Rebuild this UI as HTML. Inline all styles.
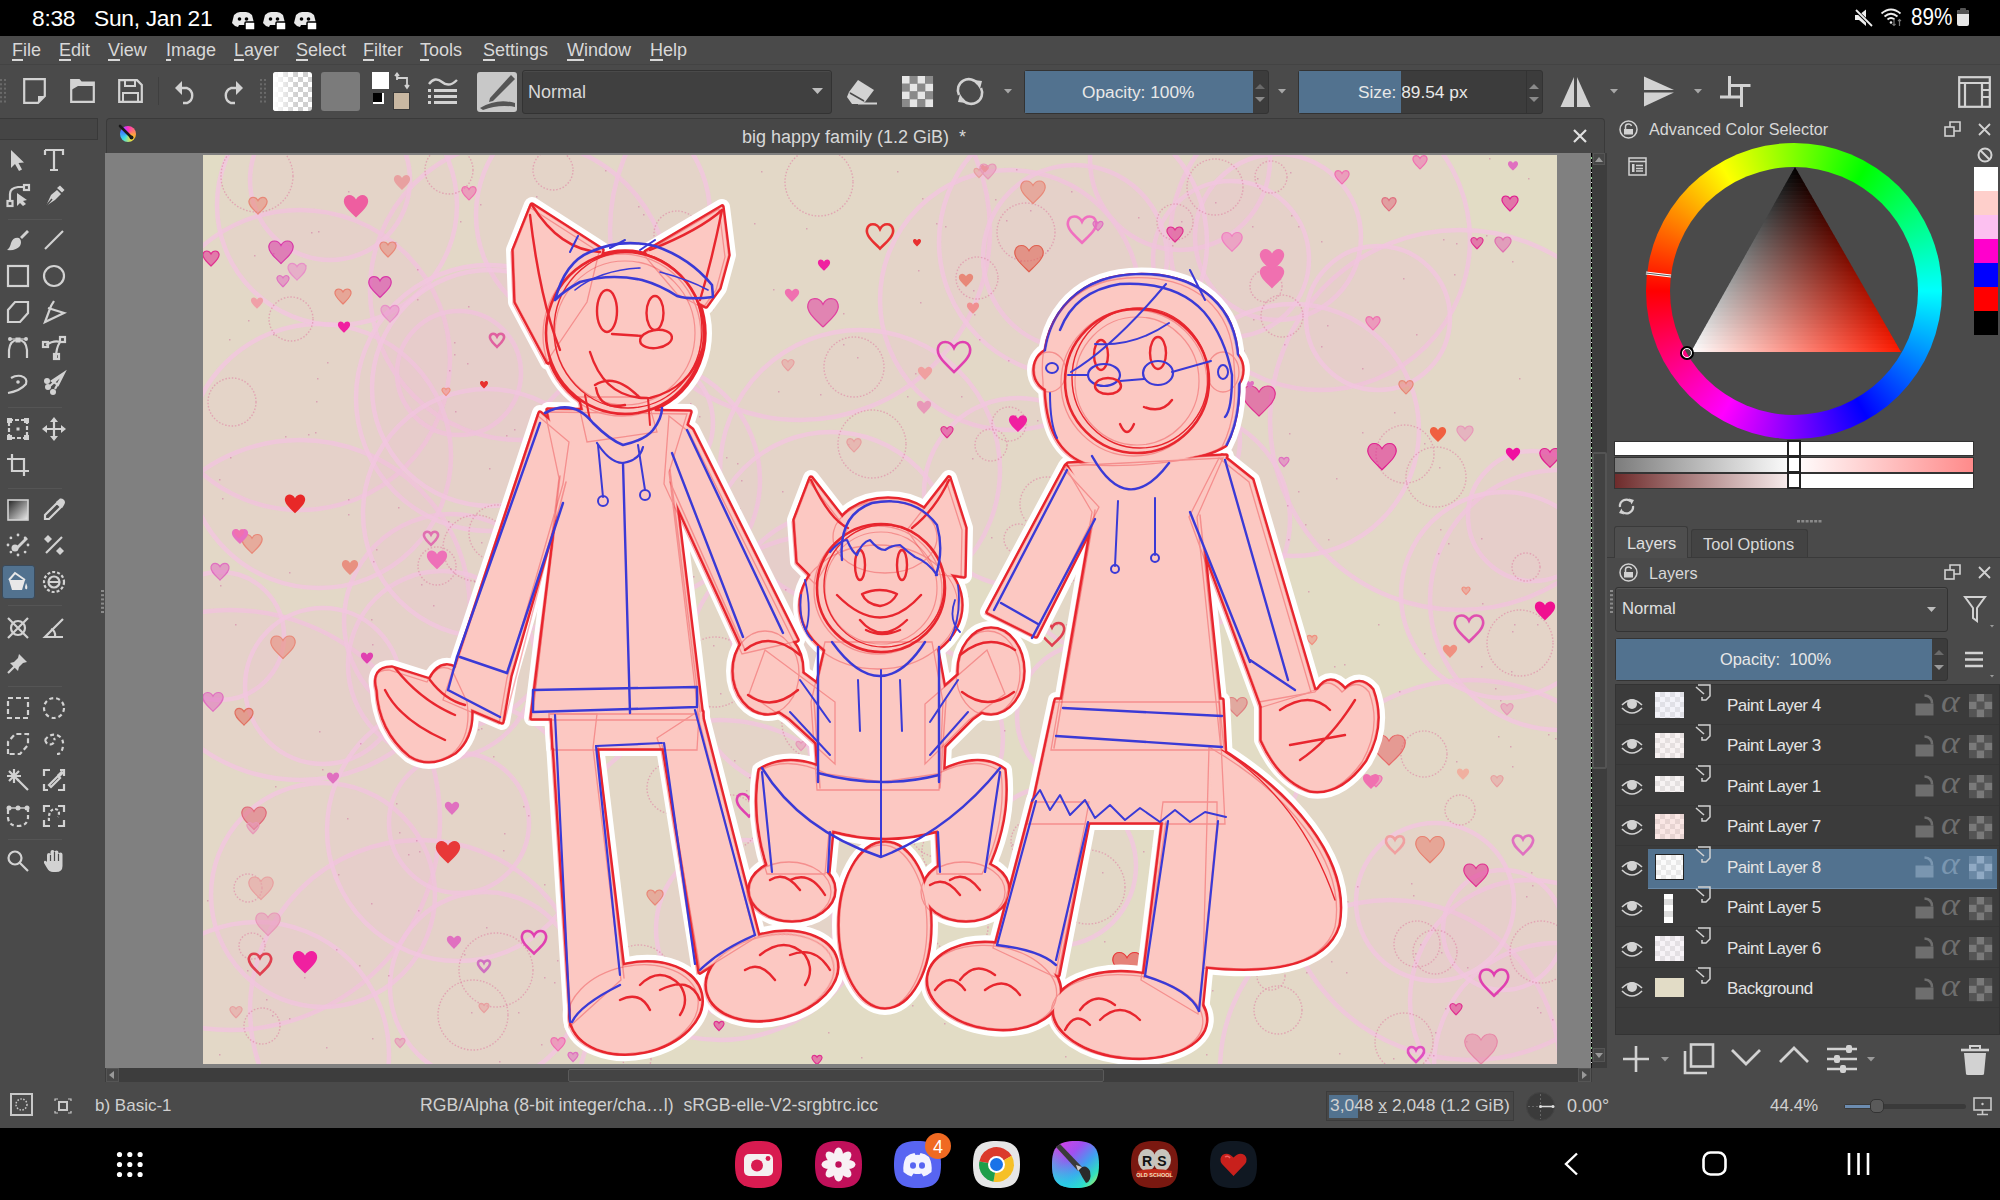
<!DOCTYPE html>
<html><head><meta charset="utf-8">
<style>
*{box-sizing:border-box;margin:0;padding:0}
html,body{width:2000px;height:1200px;overflow:hidden;background:#4a4a4a;font-family:"Liberation Sans",sans-serif;color:#dcdcdc}
.a{position:absolute}
.t{position:absolute;white-space:nowrap;line-height:1}
svg{position:absolute;overflow:visible}
.ic{fill:none;stroke:#d2d2d2;stroke-width:2.4}
.icf{fill:#d2d2d2;stroke:none}
</style></head><body>

<div class="a" style="left:0px;top:0px;width:2000px;height:36px;background:#000"></div>
<div class="t" style="left:32px;top:6.6px;font-size:22.8px;color:#fff;letter-spacing:-0.3px">8:38</div>
<div class="t" style="left:94px;top:6.6px;font-size:22.8px;color:#fff;letter-spacing:-0.3px">Sun, Jan 21</div>
<svg style="left:232px;top:9px" width="100" height="24" viewBox="0 0 100 24"><g transform="translate(0,0)"><path d="M2 6 Q5 3 8 3 L14 3 Q17 3 20 6 L22 14 Q20 17 16 18 L15 16 L7 16 L6 18 Q2 17 0 14 Z" fill="#e8e8e8"/><circle cx="7.5" cy="10" r="1.8" fill="#000"/><circle cx="14.5" cy="10" r="1.8" fill="#000"/><rect x="13" y="13" width="10" height="8" rx="1" fill="#fff" stroke="#000" stroke-width="1.5"/></g><g transform="translate(31,0)"><path d="M2 6 Q5 3 8 3 L14 3 Q17 3 20 6 L22 14 Q20 17 16 18 L15 16 L7 16 L6 18 Q2 17 0 14 Z" fill="#e8e8e8"/><circle cx="7.5" cy="10" r="1.8" fill="#000"/><circle cx="14.5" cy="10" r="1.8" fill="#000"/><rect x="13" y="13" width="10" height="8" rx="1" fill="#fff" stroke="#000" stroke-width="1.5"/></g><g transform="translate(62,0)"><path d="M2 6 Q5 3 8 3 L14 3 Q17 3 20 6 L22 14 Q20 17 16 18 L15 16 L7 16 L6 18 Q2 17 0 14 Z" fill="#e8e8e8"/><circle cx="7.5" cy="10" r="1.8" fill="#000"/><circle cx="14.5" cy="10" r="1.8" fill="#000"/><rect x="13" y="13" width="10" height="8" rx="1" fill="#fff" stroke="#000" stroke-width="1.5"/></g></svg>
<svg style="left:1853px;top:8px" width="22" height="20" viewBox="0 0 22 20"><path d="M2 7 H6 L13 1.5 V18 L6 12 H2 Z" fill="#eee"/><path d="M1 0.5 L19.5 18.5" stroke="#000" stroke-width="3.5"/><path d="M3 2 L19 18" stroke="#eee" stroke-width="1.8"/></svg>
<svg style="left:1880px;top:8px" width="26" height="20" viewBox="0 0 26 20"><path d="M1.5 5.5 Q11 -2.5 20.5 5.5" fill="none" stroke="#eee" stroke-width="1.8"/><path d="M4.5 8.5 Q11 3 17.5 8.5" fill="none" stroke="#eee" stroke-width="1.8"/><path d="M7.5 11.5 Q11 8.5 14.5 11.5" fill="none" stroke="#eee" stroke-width="1.8"/><circle cx="11" cy="14.5" r="1.3" fill="#eee"/><path d="M14 11 V17.5 M12.5 16 L14 17.5 L15.5 16" stroke="#777" stroke-width="1.2" fill="none"/><path d="M19.5 18 V11.5 M18 13 L19.5 11.5 L21 13" stroke="#777" stroke-width="1.2" fill="none"/></svg>
<div class="t" style="left:1911px;top:6px;font-size:23.5px;color:#fff;transform:scaleX(0.88);transform-origin:0 0">89%</div>
<div class="a" style="left:1957px;top:10px;width:12px;height:16px;background:#e8e8e8;border-radius:2px"></div>
<div class="a" style="left:1957px;top:10px;width:12px;height:4px;background:#555;border-radius:2px 2px 0 0"></div>
<div class="a" style="left:1960px;top:7.6px;width:6px;height:3px;background:#555;border-radius:1px"></div>
<div class="t" style="left:12px;top:41px;font-size:18px;color:#d8d8d8;">File</div>
<div class="a" style="left:12px;top:59px;width:11px;height:2px;background:#d8d8d8"></div>
<div class="t" style="left:59px;top:41px;font-size:18px;color:#d8d8d8;">Edit</div>
<div class="a" style="left:59px;top:59px;width:12px;height:2px;background:#d8d8d8"></div>
<div class="t" style="left:108px;top:41px;font-size:18px;color:#d8d8d8;">View</div>
<div class="a" style="left:108px;top:59px;width:11.7px;height:2px;background:#d8d8d8"></div>
<div class="t" style="left:166px;top:41px;font-size:18px;color:#d8d8d8;">Image</div>
<div class="a" style="left:166px;top:59px;width:5px;height:2px;background:#d8d8d8"></div>
<div class="t" style="left:234px;top:41px;font-size:18px;color:#d8d8d8;">Layer</div>
<div class="a" style="left:234px;top:59px;width:10px;height:2px;background:#d8d8d8"></div>
<div class="t" style="left:296px;top:41px;font-size:18px;color:#d8d8d8;">Select</div>
<div class="a" style="left:296px;top:59px;width:12px;height:2px;background:#d8d8d8"></div>
<div class="t" style="left:363px;top:41px;font-size:18px;color:#d8d8d8;">Filter</div>
<div class="a" style="left:363px;top:59px;width:11px;height:2px;background:#d8d8d8"></div>
<div class="t" style="left:420px;top:41px;font-size:18px;color:#d8d8d8;">Tools</div>
<div class="a" style="left:420px;top:59px;width:9px;height:2px;background:#d8d8d8"></div>
<div class="t" style="left:483px;top:41px;font-size:18px;color:#d8d8d8;">Settings</div>
<div class="a" style="left:483px;top:59px;width:12px;height:2px;background:#d8d8d8"></div>
<div class="t" style="left:567px;top:41px;font-size:18px;color:#d8d8d8;">Window</div>
<div class="a" style="left:567px;top:59px;width:17px;height:2px;background:#d8d8d8"></div>
<div class="t" style="left:650px;top:41px;font-size:18px;color:#d8d8d8;">Help</div>
<div class="a" style="left:650px;top:59px;width:13px;height:2px;background:#d8d8d8"></div>
<div class="a" style="left:0px;top:64px;width:2000px;height:1px;background:#434343"></div>
<svg style="left:0px;top:79px" width="6" height="26" viewBox="0 0 6 26"><rect x="0" y="0.0" width="2" height="2" fill="#6a6a6a"/><rect x="4" y="0.0" width="2" height="2" fill="#6a6a6a"/><rect x="0" y="4.3" width="2" height="2" fill="#6a6a6a"/><rect x="4" y="4.3" width="2" height="2" fill="#6a6a6a"/><rect x="0" y="8.6" width="2" height="2" fill="#6a6a6a"/><rect x="4" y="8.6" width="2" height="2" fill="#6a6a6a"/><rect x="0" y="12.899999999999999" width="2" height="2" fill="#6a6a6a"/><rect x="4" y="12.899999999999999" width="2" height="2" fill="#6a6a6a"/><rect x="0" y="17.2" width="2" height="2" fill="#6a6a6a"/><rect x="4" y="17.2" width="2" height="2" fill="#6a6a6a"/><rect x="0" y="21.5" width="2" height="2" fill="#6a6a6a"/><rect x="4" y="21.5" width="2" height="2" fill="#6a6a6a"/></svg>
<svg style="left:260px;top:79px" width="6" height="26" viewBox="0 0 6 26"><rect x="0" y="0.0" width="2" height="2" fill="#6a6a6a"/><rect x="4" y="0.0" width="2" height="2" fill="#6a6a6a"/><rect x="0" y="4.3" width="2" height="2" fill="#6a6a6a"/><rect x="4" y="4.3" width="2" height="2" fill="#6a6a6a"/><rect x="0" y="8.6" width="2" height="2" fill="#6a6a6a"/><rect x="4" y="8.6" width="2" height="2" fill="#6a6a6a"/><rect x="0" y="12.899999999999999" width="2" height="2" fill="#6a6a6a"/><rect x="4" y="12.899999999999999" width="2" height="2" fill="#6a6a6a"/><rect x="0" y="17.2" width="2" height="2" fill="#6a6a6a"/><rect x="4" y="17.2" width="2" height="2" fill="#6a6a6a"/><rect x="0" y="21.5" width="2" height="2" fill="#6a6a6a"/><rect x="4" y="21.5" width="2" height="2" fill="#6a6a6a"/></svg>
<svg style="left:23px;top:78px" width="23" height="26" viewBox="0 0 23 26"><path d="M1.2 1.2 H21.8 V18 L15 24.8 H1.2 Z" fill="none" stroke="#d2d2d2" stroke-width="2.2"/><path d="M21.8 18 H15 V24.8 Z" fill="#d2d2d2"/></svg>
<svg style="left:70px;top:79px" width="25" height="24" viewBox="0 0 25 24"><path d="M1.2 22.8 V1.2 H9 L11 3.5 H23.8 V22.8 Z" fill="none" stroke="#d2d2d2" stroke-width="2.2"/><path d="M1.2 1.2 H9 L11 3.5 H23.8 V7 H8 L1.2 11 Z" fill="#d2d2d2"/></svg>
<svg style="left:118px;top:79px" width="25" height="24" viewBox="0 0 25 24"><path d="M1.2 1.2 H19 L23.8 6 V22.8 H1.2 Z" fill="none" stroke="#d2d2d2" stroke-width="2.2"/><rect x="7" y="1" width="10" height="6" fill="none" stroke="#d2d2d2" stroke-width="2"/><rect x="5" y="14" width="15" height="9" fill="none" stroke="#d2d2d2" stroke-width="2"/></svg>
<div class="a" style="left:158px;top:77px;width:1px;height:28px;background:#3f3f3f"></div>
<svg style="left:174px;top:78px" width="24" height="27" viewBox="0 0 24 27"><path d="M6 10 H13 A8 8 0 0 1 13 25 H9" fill="none" stroke="#d2d2d2" stroke-width="2.4"/><path d="M1 10 L8 3 L8 17 Z" fill="#d2d2d2"/></svg>
<svg style="left:220px;top:78px" width="24" height="27" viewBox="0 0 24 27"><path d="M18 10 H11 A8 8 0 0 0 11 25 H15" fill="none" stroke="#d2d2d2" stroke-width="2.4"/><path d="M23 10 L16 3 L16 17 Z" fill="#d2d2d2"/></svg>
<svg style="left:273px;top:72px" width="39" height="39" viewBox="0 0 39 39"><defs><pattern id="chk" width="10" height="10" patternUnits="userSpaceOnUse"><rect width="10" height="10" fill="#fff"/><rect width="5" height="5" fill="#d0d0d0"/><rect x="5" y="5" width="5" height="5" fill="#d0d0d0"/></pattern><linearGradient id="wg"><stop offset="0" stop-color="#fff"/><stop offset="0.6" stop-color="#fff" stop-opacity="0"/></linearGradient></defs><rect width="39" height="39" rx="3" fill="url(#chk)"/><rect width="39" height="39" rx="3" fill="url(#wg)"/></svg>
<div class="a" style="left:321px;top:72px;width:39px;height:39px;background:#7b7b7b;border-radius:3px"></div>
<div class="a" style="left:372px;top:72px;width:17px;height:17px;background:#fff"></div>
<div class="a" style="left:393px;top:92px;width:17px;height:18px;background:#c9b8a2;border:1px solid #3a3a3a"></div>
<div class="a" style="left:373px;top:93px;width:11px;height:11px;background:#fff"></div>
<div class="a" style="left:373px;top:93px;width:9px;height:9px;background:#000"></div>
<svg style="left:394px;top:72px" width="18" height="18" viewBox="0 0 18 18"><path d="M3 2 V8 M1 4 L3 1.5 L5 4 M3 6 H13 V16 M11 13 L13 16 L15 13" fill="none" stroke="#d2d2d2" stroke-width="1.8"/></svg>
<svg style="left:428px;top:77px" width="30" height="28" viewBox="0 0 30 28"><path d="M1 7 Q7 -1 14 5 Q21 11 29 3" fill="none" stroke="#d2d2d2" stroke-width="2.4"/><rect x="0" y="12" width="3" height="3" fill="#d2d2d2"/><rect x="6" y="12" width="23" height="3" fill="#d2d2d2"/><rect x="0" y="18" width="3" height="3" fill="#d2d2d2"/><rect x="6" y="18" width="23" height="3" fill="#d2d2d2"/><rect x="0" y="24" width="3" height="3" fill="#d2d2d2"/><rect x="6" y="24" width="23" height="3" fill="#d2d2d2"/></svg>
<svg style="left:477px;top:72px" width="40" height="40" viewBox="0 0 40 40"><rect width="40" height="40" rx="3" fill="#c8c8c8"/><path d="M34 3 L38 7 L16 29 L12 30 L13 26 Z" fill="#555"/><path d="M3 36 Q20 26 38 31 L38 35 Q22 32 6 38 Z" fill="#555"/></svg>
<div class="a" style="left:522px;top:70px;width:310px;height:44px;background:#404040;border:1px solid #333;border-radius:3px;box-shadow:inset 0 1px 0 #4a4a4a"></div>
<div class="t" style="left:528px;top:83px;font-size:18px;color:#d8d8d8;">Normal</div>
<svg style="left:812px;top:88px" width="12" height="7" viewBox="0 0 12 7"><path d="M0 0 H11 L5.5 6 Z" fill="#bdbdbd"/></svg>
<svg style="left:846px;top:78px" width="32" height="27" viewBox="0 0 32 27"><path d="M12 2 L28 12 L19 24 L3 14 Z" fill="#d2d2d2"/><path d="M3 14 L19 24 L16 26 H6 L1 19 Z" fill="#d2d2d2"/><path d="M12 25.5 H31" stroke="#d2d2d2" stroke-width="2"/><path d="M4 15 L18 23" stroke="#4a4a4a" stroke-width="1.5"/></svg>
<svg style="left:902px;top:76px" width="31" height="31" viewBox="0 0 31 31"><rect x="0.0" y="0.0" width="7.8" height="7.8" fill="#e6e6e6"/><rect x="7.75" y="0.0" width="7.8" height="7.8" fill="#8a8a8a"/><rect x="15.5" y="0.0" width="7.8" height="7.8" fill="#e6e6e6"/><rect x="23.25" y="0.0" width="7.8" height="7.8" fill="#8a8a8a"/><rect x="0.0" y="7.75" width="7.8" height="7.8" fill="#8a8a8a"/><rect x="7.75" y="7.75" width="7.8" height="7.8" fill="#e6e6e6"/><rect x="15.5" y="7.75" width="7.8" height="7.8" fill="#8a8a8a"/><rect x="23.25" y="7.75" width="7.8" height="7.8" fill="#e6e6e6"/><rect x="0.0" y="15.5" width="7.8" height="7.8" fill="#e6e6e6"/><rect x="7.75" y="15.5" width="7.8" height="7.8" fill="#8a8a8a"/><rect x="15.5" y="15.5" width="7.8" height="7.8" fill="#e6e6e6"/><rect x="23.25" y="15.5" width="7.8" height="7.8" fill="#8a8a8a"/><rect x="0.0" y="23.25" width="7.8" height="7.8" fill="#8a8a8a"/><rect x="7.75" y="23.25" width="7.8" height="7.8" fill="#e6e6e6"/><rect x="15.5" y="23.25" width="7.8" height="7.8" fill="#8a8a8a"/><rect x="23.25" y="23.25" width="7.8" height="7.8" fill="#e6e6e6"/></svg>
<svg style="left:955px;top:78px" width="30" height="27" viewBox="0 0 30 27"><path d="M4 17 A11 11 0 0 1 23 6" fill="none" stroke="#d2d2d2" stroke-width="2.6"/><path d="M26 10 A11 11 0 0 1 7 21" fill="none" stroke="#d2d2d2" stroke-width="2.6"/><path d="M19 2 L27 3 L25 11 Z" fill="#d2d2d2"/><path d="M11 25 L3 24 L5 16 Z" fill="#d2d2d2"/></svg>
<svg style="left:1004px;top:89px" width="8" height="5" viewBox="0 0 8 5"><path d="M0 0 H8 L4 4.5 Z" fill="#a8a8a8"/></svg>
<div class="a" style="left:1024px;top:70px;width:245px;height:44px;background:#3c3c3c;border:1px solid #333;border-radius:3px"></div>
<div class="a" style="left:1025px;top:71px;width:228px;height:42px;background:#52728f"></div>
<div class="t" style="left:1082px;top:83.5px;font-size:17.3px;color:#e8e8e8;">Opacity: 100%</div>
<svg style="left:1255px;top:84px" width="10" height="6" viewBox="0 0 10 6"><path d="M0 5 L5 0 L10 5 Z" fill="#6a6a6a"/></svg>
<svg style="left:1255px;top:97px" width="10" height="6" viewBox="0 0 10 6"><path d="M0 0 L5 5 L10 0 Z" fill="#8a8a8a"/></svg>
<svg style="left:1278px;top:89px" width="8" height="5" viewBox="0 0 8 5"><path d="M0 0 H8 L4 4.5 Z" fill="#a8a8a8"/></svg>
<div class="a" style="left:1298px;top:70px;width:245px;height:44px;background:#3c3c3c;border:1px solid #333;border-radius:3px"></div>
<div class="a" style="left:1299px;top:71px;width:102px;height:42px;background:#52728f"></div>
<div class="t" style="left:1358px;top:83.5px;font-size:17.3px;color:#e8e8e8;">Size: 89.54 px</div>
<svg style="left:1529px;top:84px" width="10" height="6" viewBox="0 0 10 6"><path d="M0 5 L5 0 L10 5 Z" fill="#8a8a8a"/></svg>
<svg style="left:1529px;top:97px" width="10" height="6" viewBox="0 0 10 6"><path d="M0 0 L5 5 L10 0 Z" fill="#8a8a8a"/></svg>
<div class="a" style="left:1526px;top:71px;width:1px;height:42px;background:#333"></div>
<svg style="left:1560px;top:77px" width="31" height="30" viewBox="0 0 31 30"><path d="M14 0 L14 30 L0.5 30 Z" fill="#d2d2d2"/><path d="M17 0 L17 30 L30.5 30 Z" fill="#d2d2d2"/></svg>
<svg style="left:1610px;top:89px" width="8" height="5" viewBox="0 0 8 5"><path d="M0 0 H8 L4 4.5 Z" fill="#a8a8a8"/></svg>
<svg style="left:1644px;top:76px" width="31" height="31" viewBox="0 0 31 31"><path d="M0 0.5 L30 14 L0 14 Z" fill="#d2d2d2"/><path d="M0 16.5 L30 16.5 L0 30.5 Z" fill="#d2d2d2"/></svg>
<svg style="left:1694px;top:89px" width="8" height="5" viewBox="0 0 8 5"><path d="M0 0 H8 L4 4.5 Z" fill="#a8a8a8"/></svg>
<svg style="left:1720px;top:76px" width="31" height="32" viewBox="0 0 31 32"><path d="M9.5 0 V21 M8 9.5 H30.5 M21.5 8 V31 M0 21 H23" fill="none" stroke="#d2d2d2" stroke-width="3"/></svg>
<svg style="left:1958px;top:76px" width="33" height="32" viewBox="0 0 33 32"><rect x="1.2" y="1.2" width="30.6" height="29.6" fill="none" stroke="#d2d2d2" stroke-width="2.2"/><path d="M1 7 H32 M7 7 V31 M24 7 V31 M24 14 H32 M24 21 H32" fill="none" stroke="#d2d2d2" stroke-width="2.2"/></svg>
<div class="a" style="left:0px;top:118px;width:98px;height:22px;background:#454545;border:1px solid #393939;border-left:none"></div>
<div class="a" style="left:106px;top:118px;width:1499px;height:37px;background:#474747;border:1px solid #3a3a3a;border-bottom:none;border-radius:4px 4px 0 0"></div>
<div class="a" style="left:120px;top:126px;width:16px;height:16px;border-radius:50%;background:conic-gradient(#ff30c0 0deg,#ffb030 110deg,#f0e040 150deg,#40e0e0 220deg,#4080ff 290deg,#c040ff 330deg,#ff30c0 360deg)"></div>
<svg style="left:118px;top:124px" width="20" height="20" viewBox="0 0 20 20"><path d="M2 2 L13 13" stroke="#1a1a1a" stroke-width="2.6" stroke-linecap="round"/><circle cx="13.5" cy="13.5" r="2" fill="#1a1a1a"/></svg>
<div class="t" style="left:742px;top:127.5px;font-size:18px;color:#d8d8d8;">big happy family (1.2 GiB)&nbsp;&nbsp;*</div>
<svg style="left:1573px;top:129px" width="14" height="14" viewBox="0 0 14 14"><path d="M1 1 L13 13 M13 1 L1 13" stroke="#e0e0e0" stroke-width="2.2"/></svg>
<div class="a" style="left:105px;top:153px;width:1486px;height:915px;background:#808080"></div>
<div class="a" style="left:1591px;top:153px;width:1px;height:915px;background:#111"></div>
<div class="a" style="left:1592px;top:153px;width:15px;height:915px;background:#3d3d3d"></div>
<div class="a" style="left:1592px;top:452px;width:15px;height:317px;background:#424242;border:2px solid #545454;border-radius:2px"></div>
<div class="a" style="left:1591px;top:153px;width:1px;height:912px;background:repeating-linear-gradient(180deg,#000 0 4px,#8fd98f 4px 6px,#000 6px 9px,#ddd 9px 10px)"></div>
<div class="a" style="left:1593px;top:153px;width:12px;height:12px;background:#474747;border:1px solid #555"></div>
<svg style="left:1595px;top:157px" width="8" height="5" viewBox="0 0 8 5"><path d="M0 5 L4 0 L8 5 Z" fill="#9a9a9a"/></svg>
<div class="a" style="left:1593px;top:1048px;width:12px;height:14px;background:#474747;border:1px solid #555"></div>
<svg style="left:1595px;top:1053px" width="8" height="5" viewBox="0 0 8 5"><path d="M0 0 L4 5 L8 0 Z" fill="#9a9a9a"/></svg>
<div class="a" style="left:105px;top:1068px;width:1487px;height:14px;background:#3d3d3d"></div>
<div class="a" style="left:106px;top:1068px;width:13px;height:14px;background:#474747;border:1px solid #555"></div>
<svg style="left:109px;top:1071px" width="5" height="8" viewBox="0 0 5 8"><path d="M5 0 L0 4 L5 8 Z" fill="#9a9a9a"/></svg>
<div class="a" style="left:1578px;top:1068px;width:13px;height:14px;background:#474747;border:1px solid #555"></div>
<svg style="left:1582px;top:1071px" width="5" height="8" viewBox="0 0 5 8"><path d="M0 0 L5 4 L0 8 Z" fill="#9a9a9a"/></svg>
<div class="a" style="left:568px;top:1069px;width:536px;height:13px;background:#444;border:1px solid #5a5a5a;border-radius:2px"></div>
<svg style="left:101px;top:590px" width="4" height="26" viewBox="0 0 4 26"><rect x="0" y="0.0" width="3" height="2" fill="#8a8a8a"/><rect x="0" y="4.2" width="3" height="2" fill="#8a8a8a"/><rect x="0" y="8.4" width="3" height="2" fill="#8a8a8a"/><rect x="0" y="12.600000000000001" width="3" height="2" fill="#8a8a8a"/><rect x="0" y="16.8" width="3" height="2" fill="#8a8a8a"/><rect x="0" y="21.0" width="3" height="2" fill="#8a8a8a"/></svg>
<div class="a" style="left:10px;top:1093px;width:23px;height:23px;border:2px solid #c8c8c8"></div>
<svg style="left:14px;top:1097px" width="15" height="15" viewBox="0 0 15 15"><circle cx="7.5" cy="7.5" r="5.5" fill="none" stroke="#c8c8c8" stroke-width="1.5" stroke-dasharray="1.5 1.5"/></svg>
<svg style="left:55px;top:1098px" width="16" height="16" viewBox="0 0 16 16"><path d="M4 4 H12 V12 H4 Z" fill="none" stroke="#c8c8c8" stroke-width="2"/><path d="M0 3 V1 H3 M13 1 H16 V3 M16 13 V15 H13 M3 15 H0 V13" fill="none" stroke="#c8c8c8" stroke-width="1.2"/></svg>
<div class="t" style="left:95px;top:1097px;font-size:17px;color:#d0d0d0;">b) Basic-1</div>
<div class="t" style="left:420px;top:1097px;font-size:17.7px;color:#d0d0d0;">RGB/Alpha (8-bit integer/cha…l)&nbsp;&nbsp;sRGB-elle-V2-srgbtrc.icc</div>
<div class="a" style="left:1326px;top:1091px;width:188px;height:30px;border:1px solid #3c3c3c;background:#474747"></div>
<div class="a" style="left:1329px;top:1095px;width:29px;height:23px;background:#52728f"></div>
<div class="t" style="left:1330px;top:1097px;font-size:17.4px;color:#d0d0d0;">3,048 <u>x</u> 2,048 (1.2 GiB)</div>
<svg style="left:1525px;top:1091px" width="31" height="31" viewBox="0 0 31 31"><circle cx="15.5" cy="15.5" r="14" fill="#3b3b3b" stroke="#444"/><path d="M15.5 3 V28 M3 15.5 H28" stroke="#666" stroke-width="1" stroke-dasharray="2 2"/><path d="M15.5 15.5 H28" stroke="#ddd" stroke-width="1.5"/><circle cx="15.5" cy="15.5" r="1.5" fill="#ddd"/><circle cx="28" cy="15.5" r="1.5" fill="#ddd"/></svg>
<div class="t" style="left:1567px;top:1097px;font-size:18px;color:#d0d0d0;">0.00°</div>
<div class="t" style="left:1770px;top:1097px;font-size:17px;color:#d0d0d0;">44.4%</div>
<div class="a" style="left:1844px;top:1104px;width:122px;height:5px;background:#3a3a3a;border-radius:3px"></div>
<div class="a" style="left:1845px;top:1105px;width:28px;height:3px;background:#6c8cb0"></div>
<div class="a" style="left:1870px;top:1099px;width:14px;height:14px;background:#5a5a5a;border:1px solid #333;border-radius:5px"></div>
<svg style="left:1973px;top:1097px" width="19" height="19" viewBox="0 0 19 19"><rect x="1" y="1" width="17" height="12" fill="none" stroke="#c8c8c8" stroke-width="1.6"/><path d="M9.5 13 V17 M4 17.5 H15" stroke="#c8c8c8" stroke-width="1.6"/><circle cx="9.5" cy="7" r="1.2" fill="#c8c8c8"/></svg>
<div class="a" style="left:0px;top:1128px;width:2000px;height:72px;background:#000"></div>
<svg style="left:117px;top:1152px" width="26" height="25" viewBox="0 0 26 25"><circle cx="2.5" cy="2.5" r="2.6" fill="#fff"/><circle cx="12.8" cy="2.5" r="2.6" fill="#fff"/><circle cx="23.1" cy="2.5" r="2.6" fill="#fff"/><circle cx="2.5" cy="12.5" r="2.6" fill="#fff"/><circle cx="12.8" cy="12.5" r="2.6" fill="#fff"/><circle cx="23.1" cy="12.5" r="2.6" fill="#fff"/><circle cx="2.5" cy="22.5" r="2.6" fill="#fff"/><circle cx="12.8" cy="22.5" r="2.6" fill="#fff"/><circle cx="23.1" cy="22.5" r="2.6" fill="#fff"/></svg>
<svg style="left:735px;top:1141px" width="47" height="47" viewBox="0 0 47 47"><path d="M23.5 0 C41 0 47 6 47 23.5 C47 41 41 47 23.5 47 C6 47 0 41 0 23.5 C0 6 6 0 23.5 0 Z" fill="#d81b50"/><rect x="9" y="13" width="29" height="22" rx="5" fill="#f4f0f0"/><circle cx="22" cy="24.5" r="6" fill="#d81b50"/><circle cx="33" cy="17.5" r="2.4" fill="#d81b50"/></svg>
<svg style="left:815px;top:1141px" width="47" height="47" viewBox="0 0 47 47"><path d="M23.5 0 C41 0 47 6 47 23.5 C47 41 41 47 23.5 47 C6 47 0 41 0 23.5 C0 6 6 0 23.5 0 Z" fill="#c0105a"/><ellipse cx="23.5" cy="14" rx="4.6" ry="7.5" fill="#f8f0f4" transform="rotate(0 23.5 23.5)"/><ellipse cx="23.5" cy="14" rx="4.6" ry="7.5" fill="#f8f0f4" transform="rotate(45 23.5 23.5)"/><ellipse cx="23.5" cy="14" rx="4.6" ry="7.5" fill="#f8f0f4" transform="rotate(90 23.5 23.5)"/><ellipse cx="23.5" cy="14" rx="4.6" ry="7.5" fill="#f8f0f4" transform="rotate(135 23.5 23.5)"/><ellipse cx="23.5" cy="14" rx="4.6" ry="7.5" fill="#f8f0f4" transform="rotate(180 23.5 23.5)"/><ellipse cx="23.5" cy="14" rx="4.6" ry="7.5" fill="#f8f0f4" transform="rotate(225 23.5 23.5)"/><ellipse cx="23.5" cy="14" rx="4.6" ry="7.5" fill="#f8f0f4" transform="rotate(270 23.5 23.5)"/><ellipse cx="23.5" cy="14" rx="4.6" ry="7.5" fill="#f8f0f4" transform="rotate(315 23.5 23.5)"/><circle cx="23.5" cy="23.5" r="3.2" fill="#c0105a"/></svg>
<svg style="left:894px;top:1141px" width="47" height="47" viewBox="0 0 47 47"><path d="M23.5 0 C41 0 47 6 47 23.5 C47 41 41 47 23.5 47 C6 47 0 41 0 23.5 C0 6 6 0 23.5 0 Z" fill="#5865f2"/><path d="M12 16 Q16 12.5 20.5 12 L21.5 14 Q23.5 13.6 25.5 14 L26.5 12 Q31 12.5 35 16 Q38.5 23 37.5 31 Q33.5 34.5 29.5 35.5 L27.5 32.5 Q23.5 33.5 19.5 32.5 L17.5 35.5 Q13.5 34.5 9.5 31 Q8.5 23 12 16 Z" fill="#f4f4ff"/><ellipse cx="19" cy="24.5" rx="3" ry="3.3" fill="#5865f2"/><ellipse cx="28" cy="24.5" rx="3" ry="3.3" fill="#5865f2"/></svg>
<svg style="left:924px;top:1132px" width="28" height="28" viewBox="0 0 28 28"><circle cx="14" cy="14" r="13" fill="#f06a22"/><text x="14" y="20.5" text-anchor="middle" font-family="Liberation Sans" font-size="18" fill="#fff">4</text></svg>
<svg style="left:973px;top:1141px" width="47" height="47" viewBox="0 0 47 47"><path d="M23.5 0 C41 0 47 6 47 23.5 C47 41 41 47 23.5 47 C6 47 0 41 0 23.5 C0 6 6 0 23.5 0 Z" fill="#e6e6e6"/><path d="M23.5 23.5 L6.27 20.46 A17.5 17.5 0 0 1 38.66 14.75 Z" fill="#db3a2c"/><path d="M23.5 23.5 L38.66 14.75 A17.5 17.5 0 0 1 20.46 40.73 Z" fill="#f6c026"/><path d="M23.5 23.5 L20.46 40.73 A17.5 17.5 0 0 1 6.27 20.46 Z" fill="#1e9e4a"/><circle cx="23.5" cy="23.5" r="8.5" fill="#fff"/><circle cx="23.5" cy="23.5" r="6.5" fill="#1a73e8"/></svg>
<svg style="left:1052px;top:1141px" width="47" height="47" viewBox="0 0 47 47"><defs><linearGradient id="kg" x1="0" y1="0" x2="1" y2="1"><stop offset="0" stop-color="#e040e0"/><stop offset="0.35" stop-color="#a050f0"/><stop offset="0.6" stop-color="#40a0f0"/><stop offset="0.8" stop-color="#30e0c0"/><stop offset="1" stop-color="#e0f040"/></linearGradient><linearGradient id="kg2" x1="0" y1="1" x2="1" y2="0"><stop offset="0" stop-color="#20e0e0"/><stop offset="0.5" stop-color="#20e0e0" stop-opacity="0"/></linearGradient></defs><path d="M23.5 0 C41 0 47 6 47 23.5 C47 41 41 47 23.5 47 C6 47 0 41 0 23.5 C0 6 6 0 23.5 0 Z" fill="url(#kg)"/><path d="M23.5 0 C41 0 47 6 47 23.5 C47 41 41 47 23.5 47 C6 47 0 41 0 23.5 C0 6 6 0 23.5 0 Z" fill="url(#kg2)"/><path d="M4 6 L8 3 L30 26 L26 30 Z" fill="#3a3a3a"/><path d="M26 28 Q34 22 38 30 Q40 40 34 42 Q30 36 26 28 Z" fill="#2a2a2a"/><path d="M24 24 L30 26 L26 30 Z" fill="#ccc"/></svg>
<svg style="left:1131px;top:1141px" width="47" height="47" viewBox="0 0 47 47"><path d="M23.5 0 C41 0 47 6 47 23.5 C47 41 41 47 23.5 47 C6 47 0 41 0 23.5 C0 6 6 0 23.5 0 Z" fill="#7a1810"/><ellipse cx="16" cy="19" rx="9" ry="11" fill="#c8c4bc"/><ellipse cx="31" cy="19" rx="9" ry="11" fill="#c8c4bc"/><text x="16" y="25" text-anchor="middle" font-family="Liberation Sans" font-weight="bold" font-size="14" fill="#111">R</text><text x="31" y="25" text-anchor="middle" font-family="Liberation Sans" font-weight="bold" font-size="14" fill="#111">S</text><path d="M6 30 Q23.5 26 41 30 L40 37 Q23.5 33 7 37 Z" fill="#c02818"/><text x="23.5" y="35.5" text-anchor="middle" font-family="Liberation Sans" font-weight="bold" font-size="5.5" fill="#f0e0c0">OLD SCHOOL</text></svg>
<svg style="left:1210px;top:1141px" width="47" height="47" viewBox="0 0 47 47"><path d="M23.5 0 C41 0 47 6 47 23.5 C47 41 41 47 23.5 47 C6 47 0 41 0 23.5 C0 6 6 0 23.5 0 Z" fill="#101822"/><path d="M23.5 35 L12 23 Q8.5 18 12.5 14 Q18 10.5 23.5 16.5 Q29 10.5 34.5 14 Q38.5 18 35 23 Z" fill="#c8201c"/><path d="M15 16 Q18 14 20 17" stroke="#f06060" stroke-width="1.5" fill="none"/></svg>
<svg style="left:1563px;top:1152px" width="16" height="24" viewBox="0 0 16 24"><path d="M14 1.5 L3 12 L14 22.5" fill="none" stroke="#fff" stroke-width="2.4"/></svg>
<svg style="left:1702px;top:1151px" width="25" height="25" viewBox="0 0 25 25"><rect x="1.5" y="1.5" width="22" height="22" rx="7" fill="none" stroke="#fff" stroke-width="2.6"/></svg>
<svg style="left:1847px;top:1152px" width="24" height="24" viewBox="0 0 24 24"><path d="M2 1 V23 M11.5 1 V23 M21 1 V23" stroke="#fff" stroke-width="2.6"/></svg>
<svg style="left:0;top:0" width="2000" height="1200" viewBox="0 0 2000 1200">
<defs><clipPath id="cv"><rect x="203" y="155" width="1354" height="909"/></clipPath><path id="hs" d="M0 -3 C-2 -7 -7 -7 -8 -3 C-9 1 -4 5 0 9 C4 5 9 1 8 -3 C7 -7 2 -7 0 -3 Z"/></defs>
<g clip-path="url(#cv)">
<rect x="203" y="155" width="1354" height="909" fill="#e2dcc5"/>
<circle cx="300" cy="360" r="150" fill="#f0c0d8" fill-opacity="0.12" stroke="#f2c6e0" stroke-width="4.5" stroke-opacity="0.8"/>
<circle cx="520" cy="290" r="150" fill="#f0c0d8" fill-opacity="0.12" stroke="#f2c6e0" stroke-width="4.5" stroke-opacity="0.8"/>
<circle cx="800" cy="230" r="190" fill="#f0c0d8" fill-opacity="0.12" stroke="#f2c6e0" stroke-width="4.5" stroke-opacity="0.8"/>
<circle cx="1010" cy="300" r="130" fill="#f0c0d8" fill-opacity="0.12" stroke="#f2c6e0" stroke-width="4.5" stroke-opacity="0.8"/>
<circle cx="1320" cy="240" r="150" fill="#f0c0d8" fill-opacity="0.12" stroke="#f2c6e0" stroke-width="4.5" stroke-opacity="0.8"/>
<circle cx="1460" cy="420" r="190" fill="#f0c0d8" fill-opacity="0.12" stroke="#f2c6e0" stroke-width="4.5" stroke-opacity="0.8"/>
<circle cx="640" cy="480" r="120" fill="#f0c0d8" fill-opacity="0.12" stroke="#f2c6e0" stroke-width="4.5" stroke-opacity="0.8"/>
<circle cx="230" cy="820" r="210" fill="#f0c0d8" fill-opacity="0.12" stroke="#f2c6e0" stroke-width="4.5" stroke-opacity="0.8"/>
<circle cx="420" cy="1010" r="170" fill="#f0c0d8" fill-opacity="0.12" stroke="#f2c6e0" stroke-width="4.5" stroke-opacity="0.8"/>
<circle cx="1470" cy="870" r="190" fill="#f0c0d8" fill-opacity="0.12" stroke="#f2c6e0" stroke-width="4.5" stroke-opacity="0.8"/>
<circle cx="300" cy="610" r="170" fill="#f0c0d8" fill-opacity="0.12" stroke="#f2c6e0" stroke-width="4.5" stroke-opacity="0.8"/>
<circle cx="860" cy="470" r="140" fill="#f0c0d8" fill-opacity="0.12" stroke="#f2c6e0" stroke-width="4.5" stroke-opacity="0.8"/>
<circle cx="1180" cy="520" r="110" fill="#f0c0d8" fill-opacity="0.12" stroke="#f2c6e0" stroke-width="4.5" stroke-opacity="0.8"/>
<circle cx="1560" cy="600" r="130" fill="#f0c0d8" fill-opacity="0.12" stroke="#f2c6e0" stroke-width="4.5" stroke-opacity="0.8"/>
<circle cx="720" cy="880" r="160" fill="#f0c0d8" fill-opacity="0.12" stroke="#f2c6e0" stroke-width="4.5" stroke-opacity="0.8"/>
<circle cx="1390" cy="1070" r="170" fill="#f0c0d8" fill-opacity="0.12" stroke="#f2c6e0" stroke-width="4.5" stroke-opacity="0.8"/>
<circle cx="1530" cy="1000" r="120" fill="#f0c0d8" fill-opacity="0.12" stroke="#f2c6e0" stroke-width="4.5" stroke-opacity="0.8"/>
<circle cx="330" cy="180" r="80" fill="#f0c0d8" fill-opacity="0.12" stroke="#f2c6e0" stroke-width="4.5" stroke-opacity="0.8"/>
<circle cx="1180" cy="160" r="90" fill="#f0c0d8" fill-opacity="0.12" stroke="#f2c6e0" stroke-width="4.5" stroke-opacity="0.8"/>
<circle cx="815" cy="665" r="129" fill="#f0c0d8" fill-opacity="0.12" stroke="#f2c6e0" stroke-width="4.5" stroke-opacity="0.8"/>
<circle cx="833" cy="617" r="104" fill="#f0c0d8" fill-opacity="0.12" stroke="#f2c6e0" stroke-width="4.5" stroke-opacity="0.8"/>
<circle cx="451" cy="621" r="107" fill="#f0c0d8" fill-opacity="0.12" stroke="#f2c6e0" stroke-width="4.5" stroke-opacity="0.8"/>
<circle cx="1278" cy="237" r="83" fill="#f0c0d8" fill-opacity="0.12" stroke="#f2c6e0" stroke-width="4.5" stroke-opacity="0.8"/>
<circle cx="323" cy="895" r="112" fill="#f0c0d8" fill-opacity="0.12" stroke="#f2c6e0" stroke-width="4.5" stroke-opacity="0.8"/>
<circle cx="257" cy="1054" r="132" fill="#f0c0d8" fill-opacity="0.12" stroke="#f2c6e0" stroke-width="4.5" stroke-opacity="0.8"/>
<circle cx="1089" cy="716" r="72" fill="#f0c0d8" fill-opacity="0.12" stroke="#f2c6e0" stroke-width="4.5" stroke-opacity="0.8"/>
<circle cx="220" cy="636" r="64" fill="#f0c0d8" fill-opacity="0.12" stroke="#f2c6e0" stroke-width="4.5" stroke-opacity="0.8"/>
<circle cx="459" cy="373" r="62" fill="#f0c0d8" fill-opacity="0.12" stroke="#f2c6e0" stroke-width="4.5" stroke-opacity="0.8"/>
<circle cx="831" cy="555" r="123" fill="#f0c0d8" fill-opacity="0.12" stroke="#f2c6e0" stroke-width="4.5" stroke-opacity="0.8"/>
<circle cx="906" cy="739" r="97" fill="#f0c0d8" fill-opacity="0.12" stroke="#f2c6e0" stroke-width="4.5" stroke-opacity="0.8"/>
<circle cx="1101" cy="571" r="81" fill="#f0c0d8" fill-opacity="0.12" stroke="#f2c6e0" stroke-width="4.5" stroke-opacity="0.8"/>
<circle cx="1557" cy="1066" r="123" fill="#f0c0d8" fill-opacity="0.12" stroke="#f2c6e0" stroke-width="4.5" stroke-opacity="0.8"/>
<circle cx="1163" cy="440" r="77" fill="#f0c0d8" fill-opacity="0.12" stroke="#f2c6e0" stroke-width="4.5" stroke-opacity="0.8"/>
<circle cx="593" cy="215" r="117" fill="#f0c0d8" fill-opacity="0.12" stroke="#f2c6e0" stroke-width="4.5" stroke-opacity="0.8"/>
<circle cx="745" cy="929" r="89" fill="#f0c0d8" fill-opacity="0.12" stroke="#f2c6e0" stroke-width="4.5" stroke-opacity="0.8"/>
<circle cx="1503" cy="930" r="60" fill="#f0c0d8" fill-opacity="0.12" stroke="#f2c6e0" stroke-width="4.5" stroke-opacity="0.8"/>
<circle cx="485" cy="987" r="95" fill="#f0c0d8" fill-opacity="0.12" stroke="#f2c6e0" stroke-width="4.5" stroke-opacity="0.8"/>
<circle cx="1533" cy="516" r="65" fill="#f0c0d8" fill-opacity="0.12" stroke="#f2c6e0" stroke-width="4.5" stroke-opacity="0.8"/>
<circle cx="1056" cy="866" r="80" fill="#f0c0d8" fill-opacity="0.12" stroke="#f2c6e0" stroke-width="4.5" stroke-opacity="0.8"/>
<circle cx="319" cy="456" r="132" fill="#f0c0d8" fill-opacity="0.12" stroke="#f2c6e0" stroke-width="4.5" stroke-opacity="0.8"/>
<circle cx="1231" cy="259" r="78" fill="#f0c0d8" fill-opacity="0.12" stroke="#f2c6e0" stroke-width="4.5" stroke-opacity="0.8"/>
<circle cx="337" cy="205" r="120" fill="#f0c0d8" fill-opacity="0.12" stroke="#f2c6e0" stroke-width="4.5" stroke-opacity="0.8"/>
<circle cx="442" cy="665" r="94" fill="#f0c0d8" fill-opacity="0.12" stroke="#f2c6e0" stroke-width="4.5" stroke-opacity="0.8"/>
<circle cx="459" cy="823" r="70" fill="#f0c0d8" fill-opacity="0.12" stroke="#f2c6e0" stroke-width="4.5" stroke-opacity="0.8"/>
<circle cx="1075" cy="257" r="92" fill="#f0c0d8" fill-opacity="0.12" stroke="#f2c6e0" stroke-width="4.5" stroke-opacity="0.8"/>
<circle cx="489" cy="398" r="133" fill="#f0c0d8" fill-opacity="0.12" stroke="#f2c6e0" stroke-width="4.5" stroke-opacity="0.8"/>
<circle cx="1293" cy="430" r="126" fill="#f0c0d8" fill-opacity="0.12" stroke="#f2c6e0" stroke-width="4.5" stroke-opacity="0.8"/>
<circle cx="487" cy="513" r="124" fill="#f0c0d8" fill-opacity="0.12" stroke="#f2c6e0" stroke-width="4.5" stroke-opacity="0.8"/>
<circle cx="1073" cy="242" r="134" fill="#f0c0d8" fill-opacity="0.12" stroke="#f2c6e0" stroke-width="4.5" stroke-opacity="0.8"/>
<circle cx="490" cy="388" r="118" fill="#f0c0d8" fill-opacity="0.12" stroke="#f2c6e0" stroke-width="4.5" stroke-opacity="0.8"/>
<circle cx="647" cy="423" r="66" fill="#f0c0d8" fill-opacity="0.12" stroke="#f2c6e0" stroke-width="4.5" stroke-opacity="0.8"/>
<circle cx="323" cy="686" r="78" fill="#f0c0d8" fill-opacity="0.12" stroke="#f2c6e0" stroke-width="4.5" stroke-opacity="0.8"/>
<circle cx="1018" cy="492" r="94" fill="#f0c0d8" fill-opacity="0.12" stroke="#f2c6e0" stroke-width="4.5" stroke-opacity="0.8"/>
<circle cx="1504" cy="595" r="103" fill="#f0c0d8" fill-opacity="0.12" stroke="#f2c6e0" stroke-width="4.5" stroke-opacity="0.8"/>
<circle cx="1378" cy="318" r="72" fill="#f0c0d8" fill-opacity="0.12" stroke="#f2c6e0" stroke-width="4.5" stroke-opacity="0.8"/>
<circle cx="1435" cy="902" r="79" fill="#f0c0d8" fill-opacity="0.12" stroke="#f2c6e0" stroke-width="4.5" stroke-opacity="0.8"/>
<circle cx="458" cy="830" r="131" fill="#f0c0d8" fill-opacity="0.12" stroke="#f2c6e0" stroke-width="4.5" stroke-opacity="0.8"/>
<circle cx="473" cy="1015" r="35" fill="none" stroke="#e08aa8" stroke-width="1.4" stroke-dasharray="1.5 1.8" opacity="0.65"/>
<circle cx="1019" cy="539" r="15" fill="none" stroke="#e08aa8" stroke-width="1.4" stroke-dasharray="1.5 1.8" opacity="0.65"/>
<circle cx="262" cy="1026" r="18" fill="none" stroke="#e08aa8" stroke-width="1.4" stroke-dasharray="1.5 1.8" opacity="0.65"/>
<circle cx="1154" cy="391" r="33" fill="none" stroke="#e08aa8" stroke-width="1.4" stroke-dasharray="1.5 1.8" opacity="0.65"/>
<circle cx="1009" cy="424" r="17" fill="none" stroke="#e08aa8" stroke-width="1.4" stroke-dasharray="1.5 1.8" opacity="0.65"/>
<circle cx="1175" cy="222" r="18" fill="none" stroke="#e08aa8" stroke-width="1.4" stroke-dasharray="1.5 1.8" opacity="0.65"/>
<circle cx="960" cy="927" r="28" fill="none" stroke="#e08aa8" stroke-width="1.4" stroke-dasharray="1.5 1.8" opacity="0.65"/>
<circle cx="585" cy="986" r="17" fill="none" stroke="#e08aa8" stroke-width="1.4" stroke-dasharray="1.5 1.8" opacity="0.65"/>
<circle cx="232" cy="402" r="24" fill="none" stroke="#e08aa8" stroke-width="1.4" stroke-dasharray="1.5 1.8" opacity="0.65"/>
<circle cx="291" cy="319" r="22" fill="none" stroke="#e08aa8" stroke-width="1.4" stroke-dasharray="1.5 1.8" opacity="0.65"/>
<circle cx="977" cy="278" r="21" fill="none" stroke="#e08aa8" stroke-width="1.4" stroke-dasharray="1.5 1.8" opacity="0.65"/>
<circle cx="1404" cy="1042" r="29" fill="none" stroke="#e08aa8" stroke-width="1.4" stroke-dasharray="1.5 1.8" opacity="0.65"/>
<circle cx="1136" cy="686" r="16" fill="none" stroke="#e08aa8" stroke-width="1.4" stroke-dasharray="1.5 1.8" opacity="0.65"/>
<circle cx="257" cy="176" r="36" fill="none" stroke="#e08aa8" stroke-width="1.4" stroke-dasharray="1.5 1.8" opacity="0.65"/>
<circle cx="1149" cy="1026" r="13" fill="none" stroke="#e08aa8" stroke-width="1.4" stroke-dasharray="1.5 1.8" opacity="0.65"/>
<circle cx="1062" cy="594" r="31" fill="none" stroke="#e08aa8" stroke-width="1.4" stroke-dasharray="1.5 1.8" opacity="0.65"/>
<circle cx="637" cy="1059" r="14" fill="none" stroke="#e08aa8" stroke-width="1.4" stroke-dasharray="1.5 1.8" opacity="0.65"/>
<circle cx="942" cy="823" r="35" fill="none" stroke="#e08aa8" stroke-width="1.4" stroke-dasharray="1.5 1.8" opacity="0.65"/>
<circle cx="1198" cy="793" r="33" fill="none" stroke="#e08aa8" stroke-width="1.4" stroke-dasharray="1.5 1.8" opacity="0.65"/>
<circle cx="1436" cy="477" r="30" fill="none" stroke="#e08aa8" stroke-width="1.4" stroke-dasharray="1.5 1.8" opacity="0.65"/>
<circle cx="1417" cy="944" r="23" fill="none" stroke="#e08aa8" stroke-width="1.4" stroke-dasharray="1.5 1.8" opacity="0.65"/>
<circle cx="1269" cy="937" r="27" fill="none" stroke="#e08aa8" stroke-width="1.4" stroke-dasharray="1.5 1.8" opacity="0.65"/>
<circle cx="1047" cy="504" r="27" fill="none" stroke="#e08aa8" stroke-width="1.4" stroke-dasharray="1.5 1.8" opacity="0.65"/>
<circle cx="1026" cy="232" r="29" fill="none" stroke="#e08aa8" stroke-width="1.4" stroke-dasharray="1.5 1.8" opacity="0.65"/>
<circle cx="1541" cy="952" r="31" fill="none" stroke="#e08aa8" stroke-width="1.4" stroke-dasharray="1.5 1.8" opacity="0.65"/>
<circle cx="731" cy="822" r="27" fill="none" stroke="#e08aa8" stroke-width="1.4" stroke-dasharray="1.5 1.8" opacity="0.65"/>
<circle cx="800" cy="915" r="14" fill="none" stroke="#e08aa8" stroke-width="1.4" stroke-dasharray="1.5 1.8" opacity="0.65"/>
<circle cx="1215" cy="187" r="28" fill="none" stroke="#e08aa8" stroke-width="1.4" stroke-dasharray="1.5 1.8" opacity="0.65"/>
<circle cx="854" cy="367" r="30" fill="none" stroke="#e08aa8" stroke-width="1.4" stroke-dasharray="1.5 1.8" opacity="0.65"/>
<circle cx="876" cy="713" r="36" fill="none" stroke="#e08aa8" stroke-width="1.4" stroke-dasharray="1.5 1.8" opacity="0.65"/>
<circle cx="553" cy="170" r="20" fill="none" stroke="#e08aa8" stroke-width="1.4" stroke-dasharray="1.5 1.8" opacity="0.65"/>
<circle cx="1119" cy="342" r="16" fill="none" stroke="#e08aa8" stroke-width="1.4" stroke-dasharray="1.5 1.8" opacity="0.65"/>
<circle cx="1424" cy="754" r="23" fill="none" stroke="#e08aa8" stroke-width="1.4" stroke-dasharray="1.5 1.8" opacity="0.65"/>
<circle cx="1405" cy="454" r="29" fill="none" stroke="#e08aa8" stroke-width="1.4" stroke-dasharray="1.5 1.8" opacity="0.65"/>
<circle cx="476" cy="548" r="33" fill="none" stroke="#e08aa8" stroke-width="1.4" stroke-dasharray="1.5 1.8" opacity="0.65"/>
<circle cx="1435" cy="952" r="22" fill="none" stroke="#e08aa8" stroke-width="1.4" stroke-dasharray="1.5 1.8" opacity="0.65"/>
<circle cx="991" cy="445" r="16" fill="none" stroke="#e08aa8" stroke-width="1.4" stroke-dasharray="1.5 1.8" opacity="0.65"/>
<circle cx="875" cy="913" r="34" fill="none" stroke="#e08aa8" stroke-width="1.4" stroke-dasharray="1.5 1.8" opacity="0.65"/>
<circle cx="1163" cy="1015" r="19" fill="none" stroke="#e08aa8" stroke-width="1.4" stroke-dasharray="1.5 1.8" opacity="0.65"/>
<circle cx="437" cy="566" r="19" fill="none" stroke="#e08aa8" stroke-width="1.4" stroke-dasharray="1.5 1.8" opacity="0.65"/>
<circle cx="497" cy="533" r="28" fill="none" stroke="#e08aa8" stroke-width="1.4" stroke-dasharray="1.5 1.8" opacity="0.65"/>
<circle cx="872" cy="444" r="34" fill="none" stroke="#e08aa8" stroke-width="1.4" stroke-dasharray="1.5 1.8" opacity="0.65"/>
<circle cx="1526" cy="567" r="14" fill="none" stroke="#e08aa8" stroke-width="1.4" stroke-dasharray="1.5 1.8" opacity="0.65"/>
<circle cx="252" cy="946" r="13" fill="none" stroke="#e08aa8" stroke-width="1.4" stroke-dasharray="1.5 1.8" opacity="0.65"/>
<circle cx="1160" cy="674" r="20" fill="none" stroke="#e08aa8" stroke-width="1.4" stroke-dasharray="1.5 1.8" opacity="0.65"/>
<circle cx="1271" cy="177" r="16" fill="none" stroke="#e08aa8" stroke-width="1.4" stroke-dasharray="1.5 1.8" opacity="0.65"/>
<circle cx="819" cy="182" r="34" fill="none" stroke="#e08aa8" stroke-width="1.4" stroke-dasharray="1.5 1.8" opacity="0.65"/>
<circle cx="528" cy="287" r="13" fill="none" stroke="#e08aa8" stroke-width="1.4" stroke-dasharray="1.5 1.8" opacity="0.65"/>
<circle cx="1053" cy="562" r="28" fill="none" stroke="#e08aa8" stroke-width="1.4" stroke-dasharray="1.5 1.8" opacity="0.65"/>
<circle cx="1088" cy="887" r="37" fill="none" stroke="#e08aa8" stroke-width="1.4" stroke-dasharray="1.5 1.8" opacity="0.65"/>
<circle cx="1127" cy="339" r="24" fill="none" stroke="#e08aa8" stroke-width="1.4" stroke-dasharray="1.5 1.8" opacity="0.65"/>
<circle cx="449" cy="170" r="24" fill="none" stroke="#e08aa8" stroke-width="1.4" stroke-dasharray="1.5 1.8" opacity="0.65"/>
<circle cx="1167" cy="321" r="19" fill="none" stroke="#e08aa8" stroke-width="1.4" stroke-dasharray="1.5 1.8" opacity="0.65"/>
<circle cx="673" cy="788" r="26" fill="none" stroke="#e08aa8" stroke-width="1.4" stroke-dasharray="1.5 1.8" opacity="0.65"/>
<circle cx="1033" cy="841" r="22" fill="none" stroke="#e08aa8" stroke-width="1.4" stroke-dasharray="1.5 1.8" opacity="0.65"/>
<circle cx="1271" cy="976" r="14" fill="none" stroke="#e08aa8" stroke-width="1.4" stroke-dasharray="1.5 1.8" opacity="0.65"/>
<circle cx="1460" cy="810" r="15" fill="none" stroke="#e08aa8" stroke-width="1.4" stroke-dasharray="1.5 1.8" opacity="0.65"/>
<circle cx="818" cy="723" r="36" fill="none" stroke="#e08aa8" stroke-width="1.4" stroke-dasharray="1.5 1.8" opacity="0.65"/>
<circle cx="715" cy="672" r="35" fill="none" stroke="#e08aa8" stroke-width="1.4" stroke-dasharray="1.5 1.8" opacity="0.65"/>
<circle cx="1278" cy="1010" r="24" fill="none" stroke="#e08aa8" stroke-width="1.4" stroke-dasharray="1.5 1.8" opacity="0.65"/>
<circle cx="1083" cy="344" r="31" fill="none" stroke="#e08aa8" stroke-width="1.4" stroke-dasharray="1.5 1.8" opacity="0.65"/>
<circle cx="1307" cy="737" r="31" fill="none" stroke="#e08aa8" stroke-width="1.4" stroke-dasharray="1.5 1.8" opacity="0.65"/>
<circle cx="496" cy="970" r="37" fill="none" stroke="#e08aa8" stroke-width="1.4" stroke-dasharray="1.5 1.8" opacity="0.65"/>
<circle cx="1520" cy="643" r="33" fill="none" stroke="#e08aa8" stroke-width="1.4" stroke-dasharray="1.5 1.8" opacity="0.65"/>
<circle cx="639" cy="979" r="34" fill="none" stroke="#e08aa8" stroke-width="1.4" stroke-dasharray="1.5 1.8" opacity="0.65"/>
<circle cx="677" cy="234" r="23" fill="none" stroke="#e08aa8" stroke-width="1.4" stroke-dasharray="1.5 1.8" opacity="0.65"/>
<circle cx="947" cy="851" r="25" fill="none" stroke="#e08aa8" stroke-width="1.4" stroke-dasharray="1.5 1.8" opacity="0.65"/>
<circle cx="248" cy="888" r="14" fill="none" stroke="#e08aa8" stroke-width="1.4" stroke-dasharray="1.5 1.8" opacity="0.65"/>
<circle cx="1282" cy="316" r="21" fill="none" stroke="#e08aa8" stroke-width="1.4" stroke-dasharray="1.5 1.8" opacity="0.65"/>
<circle cx="1266" cy="286" r="16" fill="none" stroke="#e08aa8" stroke-width="1.4" stroke-dasharray="1.5 1.8" opacity="0.65"/>
<path d="M902 812h1.5v1.5h-1.5zM1339 781h1.5v1.5h-1.5zM1482 603h1.5v1.5h-1.5zM1486 235h1.5v1.5h-1.5zM504 634h1.5v1.5h-1.5zM597 817h1.5v1.5h-1.5zM1067 630h1.5v1.5h-1.5zM1344 664h1.5v1.5h-1.5zM626 502h1.5v1.5h-1.5zM1346 972h1.5v1.5h-1.5zM486 927h1.5v1.5h-1.5zM1512 631h1.5v1.5h-1.5zM979 339h1.5v1.5h-1.5zM928 612h1.5v1.5h-1.5zM1022 182h1.5v1.5h-1.5zM1514 624h1.5v1.5h-1.5zM746 882h1.5v1.5h-1.5zM965 601h1.5v1.5h-1.5zM1138 217h1.5v1.5h-1.5zM932 531h1.5v1.5h-1.5zM1497 993h1.5v1.5h-1.5zM568 585h1.5v1.5h-1.5zM376 549h1.5v1.5h-1.5zM1306 972h1.5v1.5h-1.5zM848 444h1.5v1.5h-1.5zM463 716h1.5v1.5h-1.5zM1454 274h1.5v1.5h-1.5zM1257 178h1.5v1.5h-1.5zM467 363h1.5v1.5h-1.5zM1132 448h1.5v1.5h-1.5zM685 718h1.5v1.5h-1.5zM347 818h1.5v1.5h-1.5zM371 619h1.5v1.5h-1.5zM543 336h1.5v1.5h-1.5zM921 552h1.5v1.5h-1.5zM712 531h1.5v1.5h-1.5zM920 302h1.5v1.5h-1.5zM481 728h1.5v1.5h-1.5zM1067 636h1.5v1.5h-1.5zM1354 711h1.5v1.5h-1.5zM1362 368h1.5v1.5h-1.5zM1205 891h1.5v1.5h-1.5zM1424 443h1.5v1.5h-1.5zM630 992h1.5v1.5h-1.5zM499 1061h1.5v1.5h-1.5zM1403 278h1.5v1.5h-1.5zM528 815h1.5v1.5h-1.5zM555 245h1.5v1.5h-1.5zM1328 539h1.5v1.5h-1.5zM1271 271h1.5v1.5h-1.5zM749 777h1.5v1.5h-1.5zM229 339h1.5v1.5h-1.5zM1126 982h1.5v1.5h-1.5zM1512 261h1.5v1.5h-1.5zM888 843h1.5v1.5h-1.5zM884 778h1.5v1.5h-1.5zM460 221h1.5v1.5h-1.5zM348 191h1.5v1.5h-1.5zM950 623h1.5v1.5h-1.5zM973 290h1.5v1.5h-1.5zM454 342h1.5v1.5h-1.5zM1339 1053h1.5v1.5h-1.5zM1456 243h1.5v1.5h-1.5zM289 1018h1.5v1.5h-1.5zM829 849h1.5v1.5h-1.5zM646 580h1.5v1.5h-1.5zM901 546h1.5v1.5h-1.5zM1016 169h1.5v1.5h-1.5zM1151 921h1.5v1.5h-1.5zM450 568h1.5v1.5h-1.5zM1203 524h1.5v1.5h-1.5zM468 306h1.5v1.5h-1.5zM897 171h1.5v1.5h-1.5zM1411 883h1.5v1.5h-1.5zM1156 936h1.5v1.5h-1.5zM1055 523h1.5v1.5h-1.5zM1014 613h1.5v1.5h-1.5zM1532 885h1.5v1.5h-1.5zM554 982h1.5v1.5h-1.5zM1210 861h1.5v1.5h-1.5zM1305 524h1.5v1.5h-1.5zM1415 953h1.5v1.5h-1.5zM1143 851h1.5v1.5h-1.5zM1238 524h1.5v1.5h-1.5zM1181 221h1.5v1.5h-1.5zM666 581h1.5v1.5h-1.5zM219 479h1.5v1.5h-1.5zM1067 722h1.5v1.5h-1.5zM518 1012h1.5v1.5h-1.5zM1104 463h1.5v1.5h-1.5zM1096 672h1.5v1.5h-1.5zM925 510h1.5v1.5h-1.5zM1555 738h1.5v1.5h-1.5zM1152 846h1.5v1.5h-1.5zM1528 178h1.5v1.5h-1.5zM1036 826h1.5v1.5h-1.5zM551 520h1.5v1.5h-1.5zM273 334h1.5v1.5h-1.5zM712 246h1.5v1.5h-1.5zM544 977h1.5v1.5h-1.5zM948 617h1.5v1.5h-1.5zM1511 671h1.5v1.5h-1.5zM1548 734h1.5v1.5h-1.5zM1298 226h1.5v1.5h-1.5zM1012 844h1.5v1.5h-1.5zM266 999h1.5v1.5h-1.5zM421 584h1.5v1.5h-1.5zM433 605h1.5v1.5h-1.5zM1030 210h1.5v1.5h-1.5zM1481 538h1.5v1.5h-1.5zM916 698h1.5v1.5h-1.5zM699 416h1.5v1.5h-1.5zM1089 664h1.5v1.5h-1.5zM588 806h1.5v1.5h-1.5zM605 170h1.5v1.5h-1.5zM536 196h1.5v1.5h-1.5zM416 840h1.5v1.5h-1.5zM731 969h1.5v1.5h-1.5zM1215 202h1.5v1.5h-1.5zM1540 1012h1.5v1.5h-1.5zM304 977h1.5v1.5h-1.5zM785 589h1.5v1.5h-1.5zM1519 378h1.5v1.5h-1.5zM912 1005h1.5v1.5h-1.5zM1181 581h1.5v1.5h-1.5zM1526 896h1.5v1.5h-1.5zM1020 261h1.5v1.5h-1.5zM1048 569h1.5v1.5h-1.5zM480 204h1.5v1.5h-1.5zM918 270h1.5v1.5h-1.5zM803 761h1.5v1.5h-1.5zM820 394h1.5v1.5h-1.5zM991 537h1.5v1.5h-1.5zM1255 637h1.5v1.5h-1.5zM1552 1019h1.5v1.5h-1.5zM1196 373h1.5v1.5h-1.5zM359 965h1.5v1.5h-1.5zM1264 723h1.5v1.5h-1.5zM690 403h1.5v1.5h-1.5zM1130 668h1.5v1.5h-1.5zM1004 730h1.5v1.5h-1.5zM1222 329h1.5v1.5h-1.5zM541 1044h1.5v1.5h-1.5zM1441 952h1.5v1.5h-1.5zM258 212h1.5v1.5h-1.5zM571 542h1.5v1.5h-1.5zM1047 250h1.5v1.5h-1.5zM936 223h1.5v1.5h-1.5zM322 769h1.5v1.5h-1.5zM948 728h1.5v1.5h-1.5zM709 590h1.5v1.5h-1.5zM489 468h1.5v1.5h-1.5zM1211 916h1.5v1.5h-1.5zM305 265h1.5v1.5h-1.5zM1297 721h1.5v1.5h-1.5zM1243 350h1.5v1.5h-1.5zM778 391h1.5v1.5h-1.5zM1298 491h1.5v1.5h-1.5zM1087 1052h1.5v1.5h-1.5zM644 653h1.5v1.5h-1.5zM1212 990h1.5v1.5h-1.5zM782 491h1.5v1.5h-1.5zM336 949h1.5v1.5h-1.5zM311 232h1.5v1.5h-1.5zM967 596h1.5v1.5h-1.5zM1130 427h1.5v1.5h-1.5zM1252 226h1.5v1.5h-1.5zM493 756h1.5v1.5h-1.5zM315 432h1.5v1.5h-1.5zM1184 785h1.5v1.5h-1.5zM587 286h1.5v1.5h-1.5zM688 814h1.5v1.5h-1.5zM700 263h1.5v1.5h-1.5zM1163 672h1.5v1.5h-1.5zM1445 1008h1.5v1.5h-1.5zM1438 553h1.5v1.5h-1.5zM1289 433h1.5v1.5h-1.5zM634 519h1.5v1.5h-1.5zM1467 967h1.5v1.5h-1.5zM540 484h1.5v1.5h-1.5zM699 486h1.5v1.5h-1.5zM739 508h1.5v1.5h-1.5zM468 667h1.5v1.5h-1.5zM1281 646h1.5v1.5h-1.5zM1334 666h1.5v1.5h-1.5zM443 844h1.5v1.5h-1.5zM1394 412h1.5v1.5h-1.5zM235 624h1.5v1.5h-1.5zM940 671h1.5v1.5h-1.5zM1510 746h1.5v1.5h-1.5zM1291 215h1.5v1.5h-1.5zM943 870h1.5v1.5h-1.5zM318 231h1.5v1.5h-1.5zM1200 971h1.5v1.5h-1.5zM319 731h1.5v1.5h-1.5zM399 832h1.5v1.5h-1.5zM1081 379h1.5v1.5h-1.5zM503 850h1.5v1.5h-1.5zM909 849h1.5v1.5h-1.5zM737 463h1.5v1.5h-1.5zM1512 766h1.5v1.5h-1.5zM871 643h1.5v1.5h-1.5zM1178 798h1.5v1.5h-1.5zM1440 529h1.5v1.5h-1.5zM1320 760h1.5v1.5h-1.5zM1357 886h1.5v1.5h-1.5zM1331 961h1.5v1.5h-1.5zM1498 736h1.5v1.5h-1.5zM912 800h1.5v1.5h-1.5zM1288 539h1.5v1.5h-1.5zM773 289h1.5v1.5h-1.5zM1206 1054h1.5v1.5h-1.5zM712 309h1.5v1.5h-1.5zM481 542h1.5v1.5h-1.5zM599 1035h1.5v1.5h-1.5zM285 436h1.5v1.5h-1.5zM360 743h1.5v1.5h-1.5zM1253 319h1.5v1.5h-1.5zM289 572h1.5v1.5h-1.5zM993 980h1.5v1.5h-1.5zM254 255h1.5v1.5h-1.5zM454 354h1.5v1.5h-1.5zM523 806h1.5v1.5h-1.5zM1008 360h1.5v1.5h-1.5zM455 411h1.5v1.5h-1.5zM438 843h1.5v1.5h-1.5zM626 653h1.5v1.5h-1.5zM1308 591h1.5v1.5h-1.5zM557 960h1.5v1.5h-1.5zM1439 467h1.5v1.5h-1.5zM944 1023h1.5v1.5h-1.5zM857 357h1.5v1.5h-1.5zM272 1015h1.5v1.5h-1.5zM1287 505h1.5v1.5h-1.5zM917 624h1.5v1.5h-1.5zM576 1053h1.5v1.5h-1.5zM1093 372h1.5v1.5h-1.5zM220 585h1.5v1.5h-1.5zM707 878h1.5v1.5h-1.5zM1168 705h1.5v1.5h-1.5zM417 299h1.5v1.5h-1.5zM639 392h1.5v1.5h-1.5zM1378 624h1.5v1.5h-1.5zM1065 1056h1.5v1.5h-1.5zM565 641h1.5v1.5h-1.5zM408 854h1.5v1.5h-1.5zM207 900h1.5v1.5h-1.5zM1347 901h1.5v1.5h-1.5zM316 401h1.5v1.5h-1.5zM1172 245h1.5v1.5h-1.5zM853 581h1.5v1.5h-1.5zM1495 688h1.5v1.5h-1.5zM1362 432h1.5v1.5h-1.5zM1271 534h1.5v1.5h-1.5zM1443 239h1.5v1.5h-1.5zM1321 346h1.5v1.5h-1.5zM939 633h1.5v1.5h-1.5zM418 910h1.5v1.5h-1.5zM625 438h1.5v1.5h-1.5zM308 434h1.5v1.5h-1.5zM836 804h1.5v1.5h-1.5zM691 779h1.5v1.5h-1.5zM348 514h1.5v1.5h-1.5zM828 1032h1.5v1.5h-1.5zM1325 749h1.5v1.5h-1.5zM222 498h1.5v1.5h-1.5zM1164 372h1.5v1.5h-1.5zM967 572h1.5v1.5h-1.5zM219 1054h1.5v1.5h-1.5zM1284 344h1.5v1.5h-1.5zM1037 420h1.5v1.5h-1.5zM713 645h1.5v1.5h-1.5zM608 462h1.5v1.5h-1.5zM734 760h1.5v1.5h-1.5zM551 338h1.5v1.5h-1.5zM1192 455h1.5v1.5h-1.5zM1481 666h1.5v1.5h-1.5zM1182 457h1.5v1.5h-1.5zM1321 241h1.5v1.5h-1.5zM395 242h1.5v1.5h-1.5zM1120 798h1.5v1.5h-1.5zM448 521h1.5v1.5h-1.5zM1335 693h1.5v1.5h-1.5zM327 362h1.5v1.5h-1.5zM417 269h1.5v1.5h-1.5zM754 223h1.5v1.5h-1.5zM1448 543h1.5v1.5h-1.5zM896 743h1.5v1.5h-1.5zM1240 900h1.5v1.5h-1.5zM726 457h1.5v1.5h-1.5zM761 171h1.5v1.5h-1.5zM746 790h1.5v1.5h-1.5zM1531 872h1.5v1.5h-1.5zM1096 708h1.5v1.5h-1.5zM230 457h1.5v1.5h-1.5zM667 746h1.5v1.5h-1.5zM348 499h1.5v1.5h-1.5zM893 871h1.5v1.5h-1.5zM1319 710h1.5v1.5h-1.5zM419 851h1.5v1.5h-1.5zM1424 653h1.5v1.5h-1.5zM681 610h1.5v1.5h-1.5zM396 803h1.5v1.5h-1.5zM1537 624h1.5v1.5h-1.5zM1171 913h1.5v1.5h-1.5zM471 1012h1.5v1.5h-1.5zM1052 336h1.5v1.5h-1.5zM317 378h1.5v1.5h-1.5zM983 788h1.5v1.5h-1.5zM649 998h1.5v1.5h-1.5zM693 576h1.5v1.5h-1.5zM372 1038h1.5v1.5h-1.5zM388 975h1.5v1.5h-1.5zM939 664h1.5v1.5h-1.5zM961 396h1.5v1.5h-1.5zM1433 1055h1.5v1.5h-1.5zM1309 701h1.5v1.5h-1.5zM371 903h1.5v1.5h-1.5zM595 969h1.5v1.5h-1.5zM530 676h1.5v1.5h-1.5zM1327 325h1.5v1.5h-1.5zM945 226h1.5v1.5h-1.5zM248 320h1.5v1.5h-1.5zM1537 1007h1.5v1.5h-1.5zM1094 435h1.5v1.5h-1.5zM1111 825h1.5v1.5h-1.5zM720 693h1.5v1.5h-1.5zM1290 172h1.5v1.5h-1.5zM474 581h1.5v1.5h-1.5zM398 507h1.5v1.5h-1.5zM974 314h1.5v1.5h-1.5zM907 396h1.5v1.5h-1.5zM972 458h1.5v1.5h-1.5zM1071 191h1.5v1.5h-1.5zM1111 288h1.5v1.5h-1.5zM1500 700h1.5v1.5h-1.5zM839 529h1.5v1.5h-1.5zM1047 781h1.5v1.5h-1.5zM1228 837h1.5v1.5h-1.5zM861 1057h1.5v1.5h-1.5zM1337 931h1.5v1.5h-1.5zM757 550h1.5v1.5h-1.5zM969 976h1.5v1.5h-1.5zM915 632h1.5v1.5h-1.5zM789 975h1.5v1.5h-1.5zM638 206h1.5v1.5h-1.5zM1185 972h1.5v1.5h-1.5zM1193 698h1.5v1.5h-1.5zM1220 433h1.5v1.5h-1.5zM1006 220h1.5v1.5h-1.5zM373 561h1.5v1.5h-1.5zM884 516h1.5v1.5h-1.5zM275 786h1.5v1.5h-1.5zM915 373h1.5v1.5h-1.5zM619 515h1.5v1.5h-1.5zM523 219h1.5v1.5h-1.5zM1435 1032h1.5v1.5h-1.5zM1104 941h1.5v1.5h-1.5zM774 886h1.5v1.5h-1.5zM504 833h1.5v1.5h-1.5zM970 975h1.5v1.5h-1.5zM338 874h1.5v1.5h-1.5zM372 644h1.5v1.5h-1.5zM1489 158h1.5v1.5h-1.5zM534 428h1.5v1.5h-1.5zM643 214h1.5v1.5h-1.5zM1413 895h1.5v1.5h-1.5zM741 480h1.5v1.5h-1.5zM995 199h1.5v1.5h-1.5zM247 970h1.5v1.5h-1.5zM621 608h1.5v1.5h-1.5zM1466 1041h1.5v1.5h-1.5zM843 344h1.5v1.5h-1.5zM604 992h1.5v1.5h-1.5zM1416 334h1.5v1.5h-1.5zM1336 478h1.5v1.5h-1.5zM843 313h1.5v1.5h-1.5zM1393 1058h1.5v1.5h-1.5zM478 729h1.5v1.5h-1.5zM464 954h1.5v1.5h-1.5zM273 253h1.5v1.5h-1.5zM1185 440h1.5v1.5h-1.5zM1420 944h1.5v1.5h-1.5zM1168 279h1.5v1.5h-1.5zM1145 1006h1.5v1.5h-1.5zM806 228h1.5v1.5h-1.5zM506 435h1.5v1.5h-1.5zM1164 335h1.5v1.5h-1.5zM449 370h1.5v1.5h-1.5zM1102 872h1.5v1.5h-1.5zM708 756h1.5v1.5h-1.5zM1399 691h1.5v1.5h-1.5zM514 429h1.5v1.5h-1.5zM1456 761h1.5v1.5h-1.5zM579 736h1.5v1.5h-1.5zM326 1047h1.5v1.5h-1.5zM799 635h1.5v1.5h-1.5zM922 198h1.5v1.5h-1.5zM1015 415h1.5v1.5h-1.5zM544 884h1.5v1.5h-1.5z" fill="#d070a0" opacity="0.5"/>
<use href="#hs" transform="translate(258 204) scale(1.12)" fill="#e88878" fill-opacity="0.55" stroke="#e88878" stroke-width="1.07"/>
<use href="#hs" transform="translate(356 204) scale(1.50)" fill="#ee5ea0"/>
<use href="#hs" transform="translate(281 250) scale(1.50)" fill="#d838a8" fill-opacity="0.55" stroke="#d838a8" stroke-width="0.80"/>
<use href="#hs" transform="translate(297 270) scale(1.12)" fill="#e890c8" fill-opacity="0.55" stroke="#e890c8" stroke-width="1.07"/>
<use href="#hs" transform="translate(388 248) scale(1.00)" fill="#e88878" fill-opacity="0.55" stroke="#e88878" stroke-width="1.20"/>
<use href="#hs" transform="translate(380 285) scale(1.38)" fill="#d838a8" fill-opacity="0.55" stroke="#d838a8" stroke-width="0.87"/>
<use href="#hs" transform="translate(343 295) scale(1.00)" fill="#e88070" fill-opacity="0.55" stroke="#e88070" stroke-width="1.20"/>
<use href="#hs" transform="translate(344 326) scale(0.75)" fill="#f020a0"/>
<use href="#hs" transform="translate(390 312) scale(1.12)" fill="#e890c8" fill-opacity="0.55" stroke="#e890c8" stroke-width="1.07"/>
<use href="#hs" transform="translate(257 302) scale(0.75)" fill="#f0a0a8"/>
<use href="#hs" transform="translate(497 339) scale(0.88)" fill="none" stroke="#e060a0" stroke-width="2.97"/>
<use href="#hs" transform="translate(484 384) scale(0.50)" fill="#e83030"/>
<use href="#hs" transform="translate(295 502) scale(1.25)" fill="#e82828"/>
<use href="#hs" transform="translate(252 542) scale(1.25)" fill="#e88878" fill-opacity="0.55" stroke="#e88878" stroke-width="0.96"/>
<use href="#hs" transform="translate(240 535) scale(1.00)" fill="#e870c0"/>
<use href="#hs" transform="translate(437 558) scale(1.25)" fill="#ee70b8"/>
<use href="#hs" transform="translate(431 537) scale(0.88)" fill="none" stroke="#e070b0" stroke-width="2.97"/>
<use href="#hs" transform="translate(350 566) scale(1.00)" fill="#e89080"/>
<use href="#hs" transform="translate(220 570) scale(1.12)" fill="#e070c0" fill-opacity="0.55" stroke="#e070c0" stroke-width="1.07"/>
<use href="#hs" transform="translate(283 645) scale(1.50)" fill="#e88878" fill-opacity="0.55" stroke="#e88878" stroke-width="0.80"/>
<use href="#hs" transform="translate(213 700) scale(1.25)" fill="#e070c0" fill-opacity="0.55" stroke="#e070c0" stroke-width="0.96"/>
<use href="#hs" transform="translate(244 715) scale(1.12)" fill="#e07060" fill-opacity="0.55" stroke="#e07060" stroke-width="1.07"/>
<use href="#hs" transform="translate(367 657) scale(0.75)" fill="#e040b0"/>
<use href="#hs" transform="translate(254 816) scale(1.50)" fill="#e06878" fill-opacity="0.55" stroke="#e06878" stroke-width="0.80"/>
<use href="#hs" transform="translate(448 850) scale(1.50)" fill="#e83838"/>
<use href="#hs" transform="translate(261 886) scale(1.50)" fill="#e8a0a0" fill-opacity="0.55" stroke="#e8a0a0" stroke-width="0.80"/>
<use href="#hs" transform="translate(268 922) scale(1.50)" fill="#e898b8" fill-opacity="0.55" stroke="#e898b8" stroke-width="0.80"/>
<use href="#hs" transform="translate(305 960) scale(1.50)" fill="#f020a0"/>
<use href="#hs" transform="translate(260 962) scale(1.38)" fill="none" stroke="#e04050" stroke-width="1.89"/>
<use href="#hs" transform="translate(534 940) scale(1.50)" fill="none" stroke="#e040b0" stroke-width="1.73"/>
<use href="#hs" transform="translate(484 965) scale(0.75)" fill="none" stroke="#d070c0" stroke-width="3.47"/>
<use href="#hs" transform="translate(880 234) scale(1.62)" fill="none" stroke="#e83030" stroke-width="1.60"/>
<use href="#hs" transform="translate(1082 227) scale(1.75)" fill="none" stroke="#f070c0" stroke-width="1.49"/>
<use href="#hs" transform="translate(1033 190) scale(1.50)" fill="#e88878" fill-opacity="0.55" stroke="#e88878" stroke-width="0.80"/>
<use href="#hs" transform="translate(1029 256) scale(1.75)" fill="#e06050" fill-opacity="0.55" stroke="#e06050" stroke-width="0.69"/>
<use href="#hs" transform="translate(824 264) scale(0.75)" fill="#f020a0"/>
<use href="#hs" transform="translate(823 310) scale(1.88)" fill="#e040a0" fill-opacity="0.55" stroke="#e040a0" stroke-width="0.64"/>
<use href="#hs" transform="translate(954 354) scale(2.00)" fill="none" stroke="#e040b0" stroke-width="1.30"/>
<use href="#hs" transform="translate(973 307) scale(0.75)" fill="#f09090"/>
<use href="#hs" transform="translate(917 242) scale(0.50)" fill="#e83030"/>
<use href="#hs" transform="translate(1018 422) scale(1.12)" fill="#f020a0"/>
<use href="#hs" transform="translate(925 372) scale(0.88)" fill="#f0a0a0"/>
<use href="#hs" transform="translate(1232 240) scale(1.25)" fill="#f080c0" fill-opacity="0.55" stroke="#f080c0" stroke-width="0.96"/>
<use href="#hs" transform="translate(1272 258) scale(1.50)" fill="#f070b0"/>
<use href="#hs" transform="translate(1272 275) scale(1.50)" fill="#f070b0"/>
<use href="#hs" transform="translate(1259 398) scale(2.00)" fill="#e03090" fill-opacity="0.55" stroke="#e03090" stroke-width="0.60"/>
<use href="#hs" transform="translate(1382 454) scale(1.75)" fill="#e02090" fill-opacity="0.55" stroke="#e02090" stroke-width="0.69"/>
<use href="#hs" transform="translate(1438 433) scale(1.00)" fill="#f06040"/>
<use href="#hs" transform="translate(1513 453) scale(0.88)" fill="#f010a0"/>
<use href="#hs" transform="translate(1389 203) scale(0.88)" fill="#e07080" fill-opacity="0.55" stroke="#e07080" stroke-width="1.37"/>
<use href="#hs" transform="translate(1510 202) scale(1.00)" fill="#e02090" fill-opacity="0.55" stroke="#e02090" stroke-width="1.20"/>
<use href="#hs" transform="translate(1503 243) scale(1.00)" fill="#e070b0" fill-opacity="0.55" stroke="#e070b0" stroke-width="1.20"/>
<use href="#hs" transform="translate(1550 456) scale(1.25)" fill="#e02090" fill-opacity="0.55" stroke="#e02090" stroke-width="0.96"/>
<use href="#hs" transform="translate(1545 609) scale(1.25)" fill="#f01090"/>
<use href="#hs" transform="translate(1469 626) scale(1.75)" fill="none" stroke="#e050b0" stroke-width="1.49"/>
<use href="#hs" transform="translate(1450 650) scale(0.88)" fill="#f09080"/>
<use href="#hs" transform="translate(1389 747) scale(2.00)" fill="#e86868" fill-opacity="0.55" stroke="#e86868" stroke-width="0.60"/>
<use href="#hs" transform="translate(1463 773) scale(0.75)" fill="#f0b0a0"/>
<use href="#hs" transform="translate(1523 843) scale(1.25)" fill="none" stroke="#e070c0" stroke-width="2.08"/>
<use href="#hs" transform="translate(1476 873) scale(1.50)" fill="#e03090" fill-opacity="0.55" stroke="#e03090" stroke-width="0.80"/>
<use href="#hs" transform="translate(1430 847) scale(1.75)" fill="#e88070" fill-opacity="0.55" stroke="#e88070" stroke-width="0.69"/>
<use href="#hs" transform="translate(1395 843) scale(1.12)" fill="none" stroke="#f0a0a0" stroke-width="2.31"/>
<use href="#hs" transform="translate(1494 980) scale(1.75)" fill="none" stroke="#e040b0" stroke-width="1.49"/>
<use href="#hs" transform="translate(1416 1053) scale(1.00)" fill="none" stroke="#e050c0" stroke-width="2.60"/>
<use href="#hs" transform="translate(1481 1046) scale(2.00)" fill="#e888a8" fill-opacity="0.55" stroke="#e888a8" stroke-width="0.60"/>
<use href="#hs" transform="translate(1052 632) scale(1.50)" fill="none" stroke="#e04050" stroke-width="1.73"/>
<use href="#hs" transform="translate(1237 705) scale(1.25)" fill="#e08080" fill-opacity="0.55" stroke="#e08080" stroke-width="0.96"/>
<use href="#hs" transform="translate(749 803) scale(1.50)" fill="none" stroke="#e040b0" stroke-width="1.73"/>
<use href="#hs" transform="translate(1127 963) scale(1.75)" fill="#e83838" fill-opacity="0.55" stroke="#e83838" stroke-width="0.69"/>
<use href="#hs" transform="translate(819 506) scale(1.00)" fill="#e878b0"/>
<use href="#hs" transform="translate(1045 828) scale(1.00)" fill="#e88878" fill-opacity="0.55" stroke="#e88878" stroke-width="1.20"/>
<use href="#hs" transform="translate(1250 384) scale(0.50)" fill="#e070c0"/>
<use href="#hs" transform="translate(708 942) scale(0.88)" fill="#e03090"/>
<use href="#hs" transform="translate(979 172) scale(0.62)" fill="#e8a0a0" fill-opacity="0.55" stroke="#e8a0a0" stroke-width="1.92"/>
<use href="#hs" transform="translate(454 941) scale(0.88)" fill="#e070c0"/>
<use href="#hs" transform="translate(396 716) scale(0.62)" fill="#e070c0"/>
<use href="#hs" transform="translate(1513 165) scale(0.62)" fill="#e070c0"/>
<use href="#hs" transform="translate(598 1025) scale(1.00)" fill="#f09080" fill-opacity="0.55" stroke="#f09080" stroke-width="1.20"/>
<use href="#hs" transform="translate(484 1007) scale(0.62)" fill="#e8a0a0" fill-opacity="0.55" stroke="#e8a0a0" stroke-width="1.92"/>
<use href="#hs" transform="translate(239 533) scale(0.62)" fill="#f070b0"/>
<use href="#hs" transform="translate(655 896) scale(1.00)" fill="#e88878" fill-opacity="0.55" stroke="#e88878" stroke-width="1.20"/>
<use href="#hs" transform="translate(1118 464) scale(0.75)" fill="#f070b0" fill-opacity="0.55" stroke="#f070b0" stroke-width="1.60"/>
<use href="#hs" transform="translate(854 444) scale(0.88)" fill="#e8a0a0" fill-opacity="0.55" stroke="#e8a0a0" stroke-width="1.37"/>
<use href="#hs" transform="translate(446 391) scale(0.50)" fill="#f09080" fill-opacity="0.55" stroke="#f09080" stroke-width="2.40"/>
<use href="#hs" transform="translate(1342 176) scale(0.88)" fill="#f070b0" fill-opacity="0.55" stroke="#f070b0" stroke-width="1.37"/>
<use href="#hs" transform="translate(985 168) scale(0.50)" fill="#f09080"/>
<use href="#hs" transform="translate(1046 1019) scale(0.50)" fill="#e898b8"/>
<use href="#hs" transform="translate(1456 1008) scale(0.75)" fill="#e03090" fill-opacity="0.55" stroke="#e03090" stroke-width="1.60"/>
<use href="#hs" transform="translate(1406 386) scale(0.88)" fill="#e88878" fill-opacity="0.55" stroke="#e88878" stroke-width="1.37"/>
<use href="#hs" transform="translate(1213 878) scale(0.75)" fill="#e88878" fill-opacity="0.55" stroke="#e88878" stroke-width="1.60"/>
<use href="#hs" transform="translate(1477 242) scale(0.75)" fill="#e03090" fill-opacity="0.55" stroke="#e03090" stroke-width="1.60"/>
<use href="#hs" transform="translate(696 293) scale(0.75)" fill="#f09080" fill-opacity="0.55" stroke="#f09080" stroke-width="1.60"/>
<use href="#hs" transform="translate(333 777) scale(0.75)" fill="#e070c0"/>
<use href="#hs" transform="translate(1050 809) scale(0.75)" fill="#e8a0a0"/>
<use href="#hs" transform="translate(1175 233) scale(1.00)" fill="#e03090" fill-opacity="0.55" stroke="#e03090" stroke-width="1.20"/>
<use href="#hs" transform="translate(253 827) scale(0.75)" fill="#e898b8" fill-opacity="0.55" stroke="#e898b8" stroke-width="1.60"/>
<use href="#hs" transform="translate(821 540) scale(0.50)" fill="#f09080"/>
<use href="#hs" transform="translate(1284 461) scale(0.62)" fill="#e070c0" fill-opacity="0.55" stroke="#e070c0" stroke-width="1.92"/>
<use href="#hs" transform="translate(966 279) scale(0.88)" fill="#e88878"/>
<use href="#hs" transform="translate(792 294) scale(0.88)" fill="#f070b0"/>
<use href="#hs" transform="translate(817 1059) scale(0.62)" fill="#e03090" fill-opacity="0.55" stroke="#e03090" stroke-width="1.92"/>
<use href="#hs" transform="translate(1497 780) scale(0.75)" fill="#e8a0a0" fill-opacity="0.55" stroke="#e8a0a0" stroke-width="1.60"/>
<use href="#hs" transform="translate(600 523) scale(0.62)" fill="#e88878" fill-opacity="0.55" stroke="#e88878" stroke-width="1.92"/>
<use href="#hs" transform="translate(1312 639) scale(0.62)" fill="#f09080" fill-opacity="0.55" stroke="#f09080" stroke-width="1.92"/>
<use href="#hs" transform="translate(1373 322) scale(0.88)" fill="#f070b0" fill-opacity="0.55" stroke="#f070b0" stroke-width="1.37"/>
<use href="#hs" transform="translate(1258 941) scale(0.75)" fill="#e88878" fill-opacity="0.55" stroke="#e88878" stroke-width="1.60"/>
<use href="#hs" transform="translate(1141 758) scale(0.75)" fill="#f070b0" fill-opacity="0.55" stroke="#f070b0" stroke-width="1.60"/>
<use href="#hs" transform="translate(1154 413) scale(0.88)" fill="#f070b0" fill-opacity="0.55" stroke="#f070b0" stroke-width="1.37"/>
<use href="#hs" transform="translate(1169 1021) scale(0.75)" fill="#f09080"/>
<use href="#hs" transform="translate(988 170) scale(1.00)" fill="#e898b8" fill-opacity="0.55" stroke="#e898b8" stroke-width="1.20"/>
<use href="#hs" transform="translate(647 406) scale(0.75)" fill="#e898b8" fill-opacity="0.55" stroke="#e898b8" stroke-width="1.60"/>
<use href="#hs" transform="translate(1078 878) scale(0.75)" fill="#f070b0" fill-opacity="0.55" stroke="#f070b0" stroke-width="1.60"/>
<use href="#hs" transform="translate(673 1004) scale(0.88)" fill="#f070b0"/>
<use href="#hs" transform="translate(1376 780) scale(0.75)" fill="#f070b0" fill-opacity="0.55" stroke="#f070b0" stroke-width="1.60"/>
<use href="#hs" transform="translate(400 1042) scale(0.62)" fill="#e898b8" fill-opacity="0.55" stroke="#e898b8" stroke-width="1.92"/>
<use href="#hs" transform="translate(1466 590) scale(0.50)" fill="#f09080" fill-opacity="0.55" stroke="#f09080" stroke-width="2.40"/>
<use href="#hs" transform="translate(1189 315) scale(1.00)" fill="#e03090" fill-opacity="0.55" stroke="#e03090" stroke-width="1.20"/>
<use href="#hs" transform="translate(1465 432) scale(1.00)" fill="#e898b8" fill-opacity="0.55" stroke="#e898b8" stroke-width="1.20"/>
<use href="#hs" transform="translate(573 1056) scale(0.62)" fill="#e070c0" fill-opacity="0.55" stroke="#e070c0" stroke-width="1.92"/>
<use href="#hs" transform="translate(801 745) scale(0.62)" fill="#e898b8" fill-opacity="0.55" stroke="#e898b8" stroke-width="1.92"/>
<use href="#hs" transform="translate(452 807) scale(0.88)" fill="#e070c0"/>
<use href="#hs" transform="translate(283 280) scale(0.75)" fill="#e070c0" fill-opacity="0.55" stroke="#e070c0" stroke-width="1.60"/>
<use href="#hs" transform="translate(469 192) scale(0.88)" fill="#f070b0" fill-opacity="0.55" stroke="#f070b0" stroke-width="1.37"/>
<use href="#hs" transform="translate(1098 225) scale(0.62)" fill="#e070c0" fill-opacity="0.55" stroke="#e070c0" stroke-width="1.92"/>
<use href="#hs" transform="translate(1420 161) scale(0.88)" fill="#f070b0" fill-opacity="0.55" stroke="#f070b0" stroke-width="1.37"/>
<use href="#hs" transform="translate(1371 780) scale(1.00)" fill="#f070b0"/>
<use href="#hs" transform="translate(947 431) scale(0.75)" fill="#e03090" fill-opacity="0.55" stroke="#e03090" stroke-width="1.60"/>
<use href="#hs" transform="translate(665 683) scale(0.75)" fill="#e898b8"/>
<use href="#hs" transform="translate(772 892) scale(1.00)" fill="#f070b0" fill-opacity="0.55" stroke="#f070b0" stroke-width="1.20"/>
<use href="#hs" transform="translate(400 696) scale(1.00)" fill="#e8a0a0"/>
<use href="#hs" transform="translate(1507 708) scale(0.75)" fill="#e898b8" fill-opacity="0.55" stroke="#e898b8" stroke-width="1.60"/>
<use href="#hs" transform="translate(211 257) scale(1.00)" fill="#e03090" fill-opacity="0.55" stroke="#e03090" stroke-width="1.20"/>
<use href="#hs" transform="translate(399 727) scale(1.00)" fill="#e8a0a0" fill-opacity="0.55" stroke="#e8a0a0" stroke-width="1.20"/>
<use href="#hs" transform="translate(788 364) scale(0.75)" fill="#e8a0a0" fill-opacity="0.55" stroke="#e8a0a0" stroke-width="1.60"/>
<use href="#hs" transform="translate(719 1025) scale(0.62)" fill="#e03090" fill-opacity="0.55" stroke="#e03090" stroke-width="1.92"/>
<use href="#hs" transform="translate(558 1043) scale(0.88)" fill="#f070b0" fill-opacity="0.55" stroke="#f070b0" stroke-width="1.37"/>
<use href="#hs" transform="translate(236 1011) scale(0.75)" fill="#e8a0a0" fill-opacity="0.55" stroke="#e8a0a0" stroke-width="1.60"/>
<use href="#hs" transform="translate(402 181) scale(1.00)" fill="#e8a0a0"/>
<use href="#hs" transform="translate(603 864) scale(0.88)" fill="#e88878" fill-opacity="0.55" stroke="#e88878" stroke-width="1.37"/>
<use href="#hs" transform="translate(924 406) scale(0.88)" fill="#e898b8"/>
<g fill="#fff" stroke="#fff" stroke-width="16" stroke-linejoin="round"><polygon points="532,205 602,250 590,300 548,362 516,302 514,250"/><polygon points="722,207 728,255 719,288 706,306 680,292 646,252"/><ellipse cx="625" cy="333" rx="79" ry="81" transform="rotate(0 625 333)"/><polygon points="580,395 650,395 660,430 590,440"/><polygon points="548,410 690,412 672,470 702,718 532,718 562,476"/><polygon points="540,413 572,440 566,482 510,676 502,722 446,698 460,655"/><path d="M378 690 Q372 668 392 668 L430 680 Q440 660 455 668 L470 700 Q475 735 455 752 Q430 768 410 755 Q380 730 378 690 Z"/><polygon points="672,414 692,430 797,640 745,652 667,482"/><polygon points="552,712 702,712 700,748 554,748"/><polygon points="552,712 600,712 596,746 624,978 572,1025"/><polygon points="660,736 700,710 758,936 700,972 664,748"/><ellipse cx="636" cy="1008" rx="66" ry="44" transform="rotate(-12 636 1008)"/><ellipse cx="772" cy="976" rx="66" ry="42" transform="rotate(-14 772 976)"/><polygon points="811,478 850,528 818,582 798,562 795,520"/><polygon points="949,478 965,528 964,576 940,572 910,528"/><ellipse cx="881" cy="588" rx="64" ry="64" transform="rotate(0 881 588)"/><ellipse cx="881" cy="605" rx="80" ry="62" transform="rotate(0 881 605)"/><polygon points="828,640 935,640 946,700 942,788 820,788 814,700"/><polygon points="768,648 838,700 838,762 790,718 752,692"/><polygon points="990,648 1008,692 972,718 928,762 928,702"/><ellipse cx="768" cy="671" rx="34" ry="42" transform="rotate(0 768 671)"/><ellipse cx="991" cy="671" rx="32" ry="42" transform="rotate(0 991 671)"/><ellipse cx="888" cy="535" rx="52" ry="36" transform="rotate(0 888 535)"/><path d="M760 770 Q790 752 830 772 L885 780 L940 772 Q980 752 1004 770 Q1010 820 985 872 L940 872 L938 830 Q885 845 832 830 L828 872 L770 872 Q752 820 760 770 Z"/><ellipse cx="792" cy="890" rx="42" ry="30" transform="rotate(0 792 890)"/><ellipse cx="966" cy="890" rx="42" ry="30" transform="rotate(0 966 890)"/><ellipse cx="885" cy="925" rx="45" ry="82" transform="rotate(0 885 925)"/><path d="M1046 380 C1040 320 1075 280 1130 276 C1190 272 1230 300 1236 350 C1240 390 1238 420 1225 445 C1200 462 1120 466 1085 462 C1055 450 1046 420 1046 380 Z"/><ellipse cx="1137" cy="381" rx="73" ry="73" transform="rotate(0 1137 381)"/><ellipse cx="1052" cy="370" rx="17" ry="20" transform="rotate(0 1052 370)"/><ellipse cx="1226" cy="370" rx="16" ry="20" transform="rotate(0 1226 370)"/><polygon points="1068,464 1226,456 1200,515 1224,748 1054,748 1095,510"/><polygon points="1066,466 1102,505 1036,636 988,612"/><polygon points="1222,456 1252,480 1314,690 1262,706 1192,515"/><path d="M1262 700 L1318 690 Q1330 672 1345 690 Q1360 675 1372 690 Q1385 725 1365 760 Q1340 795 1310 790 Q1280 780 1262 740 Z"/><polygon points="1056,700 1222,700 1228,822 1030,822"/><polygon points="1034,800 1092,800 1088,822 1058,975 996,946"/><polygon points="1166,800 1220,800 1220,822 1201,1012 1144,978"/><ellipse cx="994" cy="986" rx="66" ry="42" transform="rotate(8 994 986)"/><ellipse cx="1130" cy="1015" rx="76" ry="42" transform="rotate(5 1130 1015)"/><path d="M1212 745 C1290 790 1350 860 1338 925 C1325 968 1260 972 1206 966 Z"/></g>
<g fill="#e8262e" stroke="#e8262e" stroke-width="5.5" stroke-linejoin="round"><polygon points="532,205 602,250 590,300 548,362 516,302 514,250"/><polygon points="722,207 728,255 719,288 706,306 680,292 646,252"/><ellipse cx="625" cy="333" rx="79" ry="81" transform="rotate(0 625 333)"/><polygon points="580,395 650,395 660,430 590,440"/><polygon points="548,410 690,412 672,470 702,718 532,718 562,476"/><polygon points="540,413 572,440 566,482 510,676 502,722 446,698 460,655"/><path d="M378 690 Q372 668 392 668 L430 680 Q440 660 455 668 L470 700 Q475 735 455 752 Q430 768 410 755 Q380 730 378 690 Z"/><polygon points="672,414 692,430 797,640 745,652 667,482"/><polygon points="552,712 702,712 700,748 554,748"/><polygon points="552,712 600,712 596,746 624,978 572,1025"/><polygon points="660,736 700,710 758,936 700,972 664,748"/><ellipse cx="636" cy="1008" rx="66" ry="44" transform="rotate(-12 636 1008)"/><ellipse cx="772" cy="976" rx="66" ry="42" transform="rotate(-14 772 976)"/><polygon points="811,478 850,528 818,582 798,562 795,520"/><polygon points="949,478 965,528 964,576 940,572 910,528"/><ellipse cx="881" cy="588" rx="64" ry="64" transform="rotate(0 881 588)"/><ellipse cx="881" cy="605" rx="80" ry="62" transform="rotate(0 881 605)"/><polygon points="828,640 935,640 946,700 942,788 820,788 814,700"/><polygon points="768,648 838,700 838,762 790,718 752,692"/><polygon points="990,648 1008,692 972,718 928,762 928,702"/><ellipse cx="768" cy="671" rx="34" ry="42" transform="rotate(0 768 671)"/><ellipse cx="991" cy="671" rx="32" ry="42" transform="rotate(0 991 671)"/><ellipse cx="888" cy="535" rx="52" ry="36" transform="rotate(0 888 535)"/><path d="M760 770 Q790 752 830 772 L885 780 L940 772 Q980 752 1004 770 Q1010 820 985 872 L940 872 L938 830 Q885 845 832 830 L828 872 L770 872 Q752 820 760 770 Z"/><ellipse cx="792" cy="890" rx="42" ry="30" transform="rotate(0 792 890)"/><ellipse cx="966" cy="890" rx="42" ry="30" transform="rotate(0 966 890)"/><ellipse cx="885" cy="925" rx="45" ry="82" transform="rotate(0 885 925)"/><path d="M1046 380 C1040 320 1075 280 1130 276 C1190 272 1230 300 1236 350 C1240 390 1238 420 1225 445 C1200 462 1120 466 1085 462 C1055 450 1046 420 1046 380 Z"/><ellipse cx="1137" cy="381" rx="73" ry="73" transform="rotate(0 1137 381)"/><ellipse cx="1052" cy="370" rx="17" ry="20" transform="rotate(0 1052 370)"/><ellipse cx="1226" cy="370" rx="16" ry="20" transform="rotate(0 1226 370)"/><polygon points="1068,464 1226,456 1200,515 1224,748 1054,748 1095,510"/><polygon points="1066,466 1102,505 1036,636 988,612"/><polygon points="1222,456 1252,480 1314,690 1262,706 1192,515"/><path d="M1262 700 L1318 690 Q1330 672 1345 690 Q1360 675 1372 690 Q1385 725 1365 760 Q1340 795 1310 790 Q1280 780 1262 740 Z"/><polygon points="1056,700 1222,700 1228,822 1030,822"/><polygon points="1034,800 1092,800 1088,822 1058,975 996,946"/><polygon points="1166,800 1220,800 1220,822 1201,1012 1144,978"/><ellipse cx="994" cy="986" rx="66" ry="42" transform="rotate(8 994 986)"/><ellipse cx="1130" cy="1015" rx="76" ry="42" transform="rotate(5 1130 1015)"/><path d="M1212 745 C1290 790 1350 860 1338 925 C1325 968 1260 972 1206 966 Z"/></g>
<path d="M1046 380 C1040 320 1075 280 1130 276 C1190 272 1230 300 1236 350 C1240 390 1238 420 1225 445" fill="none" stroke="#3a3ad6" stroke-width="5.5"/>
<g fill="#fcc8c2" stroke="#fcc8c2" stroke-width="0.5" stroke-linejoin="round"><polygon points="532,205 602,250 590,300 548,362 516,302 514,250"/><polygon points="722,207 728,255 719,288 706,306 680,292 646,252"/><ellipse cx="625" cy="333" rx="79" ry="81" transform="rotate(0 625 333)"/><polygon points="580,395 650,395 660,430 590,440"/><polygon points="548,410 690,412 672,470 702,718 532,718 562,476"/><polygon points="540,413 572,440 566,482 510,676 502,722 446,698 460,655"/><path d="M378 690 Q372 668 392 668 L430 680 Q440 660 455 668 L470 700 Q475 735 455 752 Q430 768 410 755 Q380 730 378 690 Z"/><polygon points="672,414 692,430 797,640 745,652 667,482"/><polygon points="552,712 702,712 700,748 554,748"/><polygon points="552,712 600,712 596,746 624,978 572,1025"/><polygon points="660,736 700,710 758,936 700,972 664,748"/><ellipse cx="636" cy="1008" rx="66" ry="44" transform="rotate(-12 636 1008)"/><ellipse cx="772" cy="976" rx="66" ry="42" transform="rotate(-14 772 976)"/><polygon points="811,478 850,528 818,582 798,562 795,520"/><polygon points="949,478 965,528 964,576 940,572 910,528"/><ellipse cx="881" cy="588" rx="64" ry="64" transform="rotate(0 881 588)"/><ellipse cx="881" cy="605" rx="80" ry="62" transform="rotate(0 881 605)"/><polygon points="828,640 935,640 946,700 942,788 820,788 814,700"/><polygon points="768,648 838,700 838,762 790,718 752,692"/><polygon points="990,648 1008,692 972,718 928,762 928,702"/><ellipse cx="768" cy="671" rx="34" ry="42" transform="rotate(0 768 671)"/><ellipse cx="991" cy="671" rx="32" ry="42" transform="rotate(0 991 671)"/><ellipse cx="888" cy="535" rx="52" ry="36" transform="rotate(0 888 535)"/><path d="M760 770 Q790 752 830 772 L885 780 L940 772 Q980 752 1004 770 Q1010 820 985 872 L940 872 L938 830 Q885 845 832 830 L828 872 L770 872 Q752 820 760 770 Z"/><ellipse cx="792" cy="890" rx="42" ry="30" transform="rotate(0 792 890)"/><ellipse cx="966" cy="890" rx="42" ry="30" transform="rotate(0 966 890)"/><ellipse cx="885" cy="925" rx="45" ry="82" transform="rotate(0 885 925)"/><path d="M1046 380 C1040 320 1075 280 1130 276 C1190 272 1230 300 1236 350 C1240 390 1238 420 1225 445 C1200 462 1120 466 1085 462 C1055 450 1046 420 1046 380 Z"/><ellipse cx="1137" cy="381" rx="73" ry="73" transform="rotate(0 1137 381)"/><ellipse cx="1052" cy="370" rx="17" ry="20" transform="rotate(0 1052 370)"/><ellipse cx="1226" cy="370" rx="16" ry="20" transform="rotate(0 1226 370)"/><polygon points="1068,464 1226,456 1200,515 1224,748 1054,748 1095,510"/><polygon points="1066,466 1102,505 1036,636 988,612"/><polygon points="1222,456 1252,480 1314,690 1262,706 1192,515"/><path d="M1262 700 L1318 690 Q1330 672 1345 690 Q1360 675 1372 690 Q1385 725 1365 760 Q1340 795 1310 790 Q1280 780 1262 740 Z"/><polygon points="1056,700 1222,700 1228,822 1030,822"/><polygon points="1034,800 1092,800 1088,822 1058,975 996,946"/><polygon points="1166,800 1220,800 1220,822 1201,1012 1144,978"/><ellipse cx="994" cy="986" rx="66" ry="42" transform="rotate(8 994 986)"/><ellipse cx="1130" cy="1015" rx="76" ry="42" transform="rotate(5 1130 1015)"/><path d="M1212 745 C1290 790 1350 860 1338 925 C1325 968 1260 972 1206 966 Z"/></g>
<g fill="none" stroke="#e8262e" stroke-width="1.3" opacity="0.35" transform="translate(-3 2)"><polygon points="532,205 602,250 590,300 548,362 516,302 514,250"/><polygon points="722,207 728,255 719,288 706,306 680,292 646,252"/><ellipse cx="625" cy="333" rx="79" ry="81" transform="rotate(0 625 333)"/><polygon points="580,395 650,395 660,430 590,440"/><polygon points="548,410 690,412 672,470 702,718 532,718 562,476"/><polygon points="540,413 572,440 566,482 510,676 502,722 446,698 460,655"/><path d="M378 690 Q372 668 392 668 L430 680 Q440 660 455 668 L470 700 Q475 735 455 752 Q430 768 410 755 Q380 730 378 690 Z"/><polygon points="672,414 692,430 797,640 745,652 667,482"/><polygon points="552,712 702,712 700,748 554,748"/><polygon points="552,712 600,712 596,746 624,978 572,1025"/><polygon points="660,736 700,710 758,936 700,972 664,748"/><ellipse cx="636" cy="1008" rx="66" ry="44" transform="rotate(-12 636 1008)"/><ellipse cx="772" cy="976" rx="66" ry="42" transform="rotate(-14 772 976)"/><polygon points="811,478 850,528 818,582 798,562 795,520"/><polygon points="949,478 965,528 964,576 940,572 910,528"/><ellipse cx="881" cy="588" rx="64" ry="64" transform="rotate(0 881 588)"/><ellipse cx="881" cy="605" rx="80" ry="62" transform="rotate(0 881 605)"/><polygon points="828,640 935,640 946,700 942,788 820,788 814,700"/><polygon points="768,648 838,700 838,762 790,718 752,692"/><polygon points="990,648 1008,692 972,718 928,762 928,702"/><ellipse cx="768" cy="671" rx="34" ry="42" transform="rotate(0 768 671)"/><ellipse cx="991" cy="671" rx="32" ry="42" transform="rotate(0 991 671)"/><ellipse cx="888" cy="535" rx="52" ry="36" transform="rotate(0 888 535)"/><path d="M760 770 Q790 752 830 772 L885 780 L940 772 Q980 752 1004 770 Q1010 820 985 872 L940 872 L938 830 Q885 845 832 830 L828 872 L770 872 Q752 820 760 770 Z"/><ellipse cx="792" cy="890" rx="42" ry="30" transform="rotate(0 792 890)"/><ellipse cx="966" cy="890" rx="42" ry="30" transform="rotate(0 966 890)"/><ellipse cx="885" cy="925" rx="45" ry="82" transform="rotate(0 885 925)"/><path d="M1046 380 C1040 320 1075 280 1130 276 C1190 272 1230 300 1236 350 C1240 390 1238 420 1225 445 C1200 462 1120 466 1085 462 C1055 450 1046 420 1046 380 Z"/><ellipse cx="1137" cy="381" rx="73" ry="73" transform="rotate(0 1137 381)"/><ellipse cx="1052" cy="370" rx="17" ry="20" transform="rotate(0 1052 370)"/><ellipse cx="1226" cy="370" rx="16" ry="20" transform="rotate(0 1226 370)"/><polygon points="1068,464 1226,456 1200,515 1224,748 1054,748 1095,510"/><polygon points="1066,466 1102,505 1036,636 988,612"/><polygon points="1222,456 1252,480 1314,690 1262,706 1192,515"/><path d="M1262 700 L1318 690 Q1330 672 1345 690 Q1360 675 1372 690 Q1385 725 1365 760 Q1340 795 1310 790 Q1280 780 1262 740 Z"/><polygon points="1056,700 1222,700 1228,822 1030,822"/><polygon points="1034,800 1092,800 1088,822 1058,975 996,946"/><polygon points="1166,800 1220,800 1220,822 1201,1012 1144,978"/><ellipse cx="994" cy="986" rx="66" ry="42" transform="rotate(8 994 986)"/><ellipse cx="1130" cy="1015" rx="76" ry="42" transform="rotate(5 1130 1015)"/><path d="M1212 745 C1290 790 1350 860 1338 925 C1325 968 1260 972 1206 966 Z"/></g>
<g opacity="0.35">
<path d="M560 476 L533 712" fill="none" stroke="#e8262e" stroke-width="1.5" stroke-linecap="round" stroke-linejoin="round" />
<path d="M670 470 L700 712" fill="none" stroke="#e8262e" stroke-width="1.5" stroke-linecap="round" stroke-linejoin="round" />
<path d="M566 482 L505 720" fill="none" stroke="#e8262e" stroke-width="1.5" stroke-linecap="round" stroke-linejoin="round" />
<path d="M670 482 L745 650" fill="none" stroke="#e8262e" stroke-width="1.5" stroke-linecap="round" stroke-linejoin="round" />
<path d="M598 746 L624 978" fill="none" stroke="#e8262e" stroke-width="1.5" stroke-linecap="round" stroke-linejoin="round" />
<path d="M662 745 L700 970" fill="none" stroke="#e8262e" stroke-width="1.5" stroke-linecap="round" stroke-linejoin="round" />
<path d="M820 788 L814 700 M940 788 L946 700" fill="none" stroke="#e8262e" stroke-width="1.5" stroke-linecap="round" stroke-linejoin="round" />
<path d="M1095 510 L1054 748" fill="none" stroke="#e8262e" stroke-width="1.5" stroke-linecap="round" stroke-linejoin="round" />
<path d="M1200 515 L1224 748" fill="none" stroke="#e8262e" stroke-width="1.5" stroke-linecap="round" stroke-linejoin="round" />
<path d="M1088 822 L1058 975" fill="none" stroke="#e8262e" stroke-width="1.5" stroke-linecap="round" stroke-linejoin="round" />
<path d="M1166 822 L1144 978" fill="none" stroke="#e8262e" stroke-width="1.5" stroke-linecap="round" stroke-linejoin="round" />
<ellipse cx="625" cy="333" rx="70" ry="72" transform="rotate(0 625 333)" fill="none" stroke="#e8262e" stroke-width="1.2"/>
<ellipse cx="881" cy="588" rx="56" ry="56" transform="rotate(0 881 588)" fill="none" stroke="#e8262e" stroke-width="1.2"/>
<ellipse cx="1137" cy="381" rx="62" ry="64" transform="rotate(0 1137 381)" fill="none" stroke="#e8262e" stroke-width="1.2"/>
</g>
<ellipse cx="625" cy="333" rx="79" ry="81" transform="rotate(0 625 333)" fill="none" stroke="#e8262e" stroke-width="2.6"/>
<ellipse cx="628" cy="330" rx="74" ry="78" transform="rotate(0 628 330)" fill="none" stroke="#e8262e" stroke-width="1.4"/>
<ellipse cx="881" cy="588" rx="64" ry="64" transform="rotate(0 881 588)" fill="none" stroke="#e8262e" stroke-width="2.6"/>
<ellipse cx="884" cy="586" rx="60" ry="61" transform="rotate(0 884 586)" fill="none" stroke="#e8262e" stroke-width="1.4"/>
<ellipse cx="1137" cy="381" rx="72" ry="72" transform="rotate(0 1137 381)" fill="none" stroke="#e8262e" stroke-width="2.6"/>
<ellipse cx="1140" cy="378" rx="68" ry="70" transform="rotate(0 1140 378)" fill="none" stroke="#e8262e" stroke-width="1.4"/>
<path d="M532 205 Q560 250 600 252" fill="none" stroke="#e8262e" stroke-width="2.4" stroke-linecap="round" stroke-linejoin="round" />
<path d="M530 215 Q540 300 560 350" fill="none" stroke="#e8262e" stroke-width="2.4" stroke-linecap="round" stroke-linejoin="round" />
<path d="M722 210 Q700 230 650 250" fill="none" stroke="#e8262e" stroke-width="2.4" stroke-linecap="round" stroke-linejoin="round" />
<path d="M722 210 Q712 260 700 300" fill="none" stroke="#e8262e" stroke-width="2.4" stroke-linecap="round" stroke-linejoin="round" />
<ellipse cx="607" cy="311" rx="10" ry="21" transform="rotate(0 607 311)" fill="none" stroke="#e8262e" stroke-width="2.4"/>
<ellipse cx="655" cy="313" rx="8.5" ry="17" transform="rotate(0 655 313)" fill="none" stroke="#e8262e" stroke-width="2.4"/>
<ellipse cx="656" cy="339" rx="16" ry="9" transform="rotate(-8 656 339)" fill="none" stroke="#e8262e" stroke-width="2.4"/>
<path d="M612 334 L642 336" fill="none" stroke="#e8262e" stroke-width="2.4" stroke-linecap="round" stroke-linejoin="round" />
<path d="M590 352 Q605 400 650 398 Q690 388 702 350" fill="none" stroke="#e8262e" stroke-width="2.4" stroke-linecap="round" stroke-linejoin="round" />
<path d="M595 385 Q615 372 640 398 M596 388 Q600 410 625 405" fill="none" stroke="#e8262e" stroke-width="2.4" stroke-linecap="round" stroke-linejoin="round" />
<path d="M585 395 L590 420 M648 398 L650 425" fill="none" stroke="#e8262e" stroke-width="2" stroke-linecap="round" stroke-linejoin="round" />
<path d="M555 300 Q565 262 590 252 Q620 238 655 246 Q690 258 712 285 L713 297 Q690 300 677 296 Q660 285 642 280 Q610 273 580 282 Q565 290 555 300" fill="none" stroke="#3a3ad6" stroke-width="2.6" stroke-linecap="round" stroke-linejoin="round" />
<path d="M575 290 Q600 270 640 268 M660 272 Q690 280 708 290" fill="none" stroke="#3a3ad6" stroke-width="1.6" stroke-linecap="round" stroke-linejoin="round" />
<path d="M570 252 L578 236 M610 248 L625 240 M640 250 L655 240" fill="none" stroke="#3a3ad6" stroke-width="2" stroke-linecap="round" stroke-linejoin="round" />
<path d="M545 413 Q573 398 593 423 Q610 440 623 445 Q645 440 653 430 Q662 418 662 408" fill="none" stroke="#3a3ad6" stroke-width="2.6" stroke-linecap="round" stroke-linejoin="round" />
<path d="M597 443 Q610 463 623 463 Q640 460 643 447" fill="none" stroke="#3a3ad6" stroke-width="2.2" stroke-linecap="round" stroke-linejoin="round" />
<path d="M598 445 L603 497 M638 445 L645 490" fill="none" stroke="#3a3ad6" stroke-width="2" stroke-linecap="round" stroke-linejoin="round" />
<ellipse cx="603" cy="501" rx="5" ry="5" transform="rotate(0 603 501)" fill="none" stroke="#3a3ad6" stroke-width="2"/>
<ellipse cx="645" cy="495" rx="5" ry="5" transform="rotate(0 645 495)" fill="none" stroke="#3a3ad6" stroke-width="2"/>
<path d="M623 463 L630 713" fill="none" stroke="#3a3ad6" stroke-width="2.4" stroke-linecap="round" stroke-linejoin="round" />
<path d="M540 423 L457 657 M563 503 L507 673" fill="none" stroke="#3a3ad6" stroke-width="2.4" stroke-linecap="round" stroke-linejoin="round" />
<path d="M460 657 L507 673 M448 690 L500 717 M457 657 L448 690" fill="none" stroke="#3a3ad6" stroke-width="2.4" stroke-linecap="round" stroke-linejoin="round" />
<path d="M533 690 L697 687 M533 712 L697 707 M533 690 L533 712 M697 687 L697 707" fill="none" stroke="#3a3ad6" stroke-width="2.4" stroke-linecap="round" stroke-linejoin="round" />
<path d="M672 453 L743 637 M687 430 L783 633" fill="none" stroke="#3a3ad6" stroke-width="2.4" stroke-linecap="round" stroke-linejoin="round" />
<path d="M555 715 L570 1022 M664 743 L695 964 M596 746 L620 975 M695 710 L755 935" fill="none" stroke="#3a3ad6" stroke-width="2.2" stroke-linecap="round" stroke-linejoin="round" />
<path d="M596 746 L662 743" fill="none" stroke="#3a3ad6" stroke-width="2.2" stroke-linecap="round" stroke-linejoin="round" />
<path d="M572 1022 Q580 1005 620 985 M700 970 Q720 950 755 935" fill="none" stroke="#3a3ad6" stroke-width="2.4" stroke-linecap="round" stroke-linejoin="round" />
<path d="M385 690 Q400 720 445 740 M395 668 Q420 700 455 715 M430 680 Q445 700 465 705" fill="none" stroke="#e8262e" stroke-width="2.4" stroke-linecap="round" stroke-linejoin="round" />
<path d="M640 985 Q660 965 680 985 Q690 1000 680 1015 M660 990 Q690 975 700 1000 M620 1000 Q640 990 650 1010" fill="none" stroke="#e8262e" stroke-width="2.4" stroke-linecap="round" stroke-linejoin="round" />
<path d="M760 955 Q785 935 805 955 Q815 970 805 985 M790 955 Q815 945 830 970 M745 970 Q760 960 775 980" fill="none" stroke="#e8262e" stroke-width="2.4" stroke-linecap="round" stroke-linejoin="round" />
<path d="M811 480 Q830 520 848 528 M949 480 Q935 510 912 528" fill="none" stroke="#e8262e" stroke-width="2.4" stroke-linecap="round" stroke-linejoin="round" />
<ellipse cx="860" cy="565" rx="5" ry="15" transform="rotate(0 860 565)" fill="none" stroke="#e8262e" stroke-width="2.4"/>
<ellipse cx="902" cy="565" rx="5" ry="15" transform="rotate(0 902 565)" fill="none" stroke="#e8262e" stroke-width="2.4"/>
<path d="M862 594 Q880 586 897 594 Q892 604 880 606 Q866 604 862 594" fill="none" stroke="#e8262e" stroke-width="2.4" stroke-linecap="round" stroke-linejoin="round" />
<path d="M837 595 Q881 640 921 595" fill="none" stroke="#e8262e" stroke-width="2.4" stroke-linecap="round" stroke-linejoin="round" />
<path d="M860 620 Q881 645 907 620 M866 630 Q881 638 900 630" fill="none" stroke="#e8262e" stroke-width="2.4" stroke-linecap="round" stroke-linejoin="round" />
<path d="M842 560 Q838 515 872 503 Q915 495 937 525 Q944 550 936 575" fill="none" stroke="#3a3ad6" stroke-width="2.4" stroke-linecap="round" stroke-linejoin="round" />
<path d="M830 552 Q840 540 847 540 Q852 552 857 555 Q862 542 870 540 Q878 550 885 550 Q892 545 900 545 Q908 552 915 557 Q928 562 937 575" fill="none" stroke="#3a3ad6" stroke-width="2.2" stroke-linecap="round" stroke-linejoin="round" />
<path d="M801 595 Q798 625 812 640 M805 580 Q812 610 806 630 M958 585 Q962 615 950 640 M955 600 Q948 620 960 632" fill="none" stroke="#3a3ad6" stroke-width="1.8" stroke-linecap="round" stroke-linejoin="round" />
<path d="M818 647 L818 782 M939 647 L939 782 M832 642 Q881 710 925 642" fill="none" stroke="#3a3ad6" stroke-width="2.4" stroke-linecap="round" stroke-linejoin="round" />
<path d="M881 670 L881 857 M858 680 L860 731 M900 680 L902 731" fill="none" stroke="#3a3ad6" stroke-width="2" stroke-linecap="round" stroke-linejoin="round" />
<path d="M818 773 Q880 790 939 775" fill="none" stroke="#3a3ad6" stroke-width="2.4" stroke-linecap="round" stroke-linejoin="round" />
<path d="M762 768 Q800 830 881 857 Q950 830 1000 768" fill="none" stroke="#3a3ad6" stroke-width="2.4" stroke-linecap="round" stroke-linejoin="round" />
<path d="M762 772 L772 872 M830 832 L828 872 M938 832 L940 872 M1000 772 L985 872" fill="none" stroke="#3a3ad6" stroke-width="2.2" stroke-linecap="round" stroke-linejoin="round" />
<path d="M790 712 L830 755 M800 680 L830 722 M968 712 L930 755 M958 680 L930 722" fill="none" stroke="#3a3ad6" stroke-width="2" stroke-linecap="round" stroke-linejoin="round" />
<path d="M745 650 Q770 630 800 655 M748 695 Q772 712 798 690 M960 655 Q988 632 1015 650 M962 692 Q988 712 1014 692" fill="none" stroke="#e8262e" stroke-width="2.4" stroke-linecap="round" stroke-linejoin="round" />
<path d="M770 880 Q785 870 800 890 M790 880 Q810 870 825 895 M950 880 Q965 870 980 890 M930 885 Q945 875 960 895" fill="none" stroke="#e8262e" stroke-width="2.4" stroke-linecap="round" stroke-linejoin="round" />
<ellipse cx="1101" cy="355" rx="7" ry="15" transform="rotate(0 1101 355)" fill="none" stroke="#e8262e" stroke-width="2.4"/>
<ellipse cx="1158" cy="353" rx="8" ry="16" transform="rotate(0 1158 353)" fill="none" stroke="#e8262e" stroke-width="2.4"/>
<ellipse cx="1104" cy="375" rx="16" ry="11" transform="rotate(0 1104 375)" fill="none" stroke="#3a3ad6" stroke-width="2.2"/>
<ellipse cx="1158" cy="373" rx="15" ry="12" transform="rotate(0 1158 373)" fill="none" stroke="#3a3ad6" stroke-width="2.2"/>
<path d="M1068 375 L1088 375 M1120 381 L1144 379 M1172 372 L1211 361" fill="none" stroke="#3a3ad6" stroke-width="2" stroke-linecap="round" stroke-linejoin="round" />
<ellipse cx="1108" cy="386" rx="13" ry="8" transform="rotate(0 1108 386)" fill="none" stroke="#e8262e" stroke-width="2.4"/>
<path d="M1144 407 Q1162 414 1172 400" fill="none" stroke="#e8262e" stroke-width="2.4" stroke-linecap="round" stroke-linejoin="round" />
<path d="M1120 424 Q1127 440 1134 424" fill="none" stroke="#e8262e" stroke-width="2.4" stroke-linecap="round" stroke-linejoin="round" />
<path d="M1060 330 Q1075 291 1120 284 Q1176 281 1204 312 Q1225 337 1232 375 Q1232 410 1225 417" fill="none" stroke="#3a3ad6" stroke-width="2.4" stroke-linecap="round" stroke-linejoin="round" />
<path d="M1050 393 Q1050 424 1057 438 M1071 372 Q1113 347 1166 284 M1095 344 Q1134 347 1169 323 M1205 300 L1190 270" fill="none" stroke="#3a3ad6" stroke-width="2" stroke-linecap="round" stroke-linejoin="round" />
<ellipse cx="1052" cy="368" rx="6" ry="5" transform="rotate(0 1052 368)" fill="none" stroke="#3a3ad6" stroke-width="2"/>
<ellipse cx="1223" cy="372" rx="5" ry="7" transform="rotate(0 1223 372)" fill="none" stroke="#3a3ad6" stroke-width="2"/>
<path d="M1092 456 Q1127 519 1169 463" fill="none" stroke="#3a3ad6" stroke-width="2.4" stroke-linecap="round" stroke-linejoin="round" />
<path d="M1118 501 L1115 566 M1155 498 L1155 555" fill="none" stroke="#3a3ad6" stroke-width="2" stroke-linecap="round" stroke-linejoin="round" />
<ellipse cx="1115" cy="569" rx="4" ry="4" transform="rotate(0 1115 569)" fill="none" stroke="#3a3ad6" stroke-width="2"/>
<ellipse cx="1155" cy="558" rx="4" ry="4" transform="rotate(0 1155 558)" fill="none" stroke="#3a3ad6" stroke-width="2"/>
<path d="M1067 470 L994 610 M1095 519 L1032 638 M1001 603 L1038 624" fill="none" stroke="#3a3ad6" stroke-width="2.4" stroke-linecap="round" stroke-linejoin="round" />
<path d="M1190 512 L1250 662 M1225 460 L1288 680 M1250 660 L1295 690" fill="none" stroke="#3a3ad6" stroke-width="2.4" stroke-linecap="round" stroke-linejoin="round" />
<path d="M1063 708 L1222 716 M1056 736 L1222 747" fill="none" stroke="#3a3ad6" stroke-width="2.4" stroke-linecap="round" stroke-linejoin="round" />
<path d="M1032 801 L1040 790 L1050 810 L1060 795 L1070 815 L1085 800 L1095 818 L1110 805 L1125 820 L1140 808 L1160 822 L1175 810 L1190 822 L1205 812 L1226 817" fill="none" stroke="#3a3ad6" stroke-width="2" stroke-linecap="round" stroke-linejoin="round" />
<path d="M1036 801 L997 945 M1218 821 L1199 1011 M1168 821 L1145 976 M1088 822 L1056 960" fill="none" stroke="#3a3ad6" stroke-width="2.2" stroke-linecap="round" stroke-linejoin="round" />
<path d="M997 945 Q1040 950 1056 965 M1145 976 Q1190 990 1199 1011" fill="none" stroke="#3a3ad6" stroke-width="2.4" stroke-linecap="round" stroke-linejoin="round" />
<path d="M960 980 Q975 960 995 975 M935 990 Q950 970 965 990 M985 990 Q1005 975 1020 995" fill="none" stroke="#e8262e" stroke-width="2.4" stroke-linecap="round" stroke-linejoin="round" />
<path d="M1080 1010 Q1095 990 1115 1005 M1100 1020 Q1120 1000 1140 1020 M1065 1030 Q1075 1010 1090 1025" fill="none" stroke="#e8262e" stroke-width="2.4" stroke-linecap="round" stroke-linejoin="round" />
<path d="M1280 710 Q1310 690 1330 710 M1300 760 Q1330 740 1355 700 M1290 745 L1345 735" fill="none" stroke="#e8262e" stroke-width="2.4" stroke-linecap="round" stroke-linejoin="round" />
<path d="M1222 750 Q1300 800 1335 900" fill="none" stroke="#e8262e" stroke-width="1.4" stroke-linecap="round" stroke-linejoin="round" />
</g></svg>
<div class="a" style="left:8px;top:219px;width:54px;height:1px;background:#555"></div>
<div class="a" style="left:8px;top:407px;width:54px;height:1px;background:#555"></div>
<div class="a" style="left:8px;top:488px;width:54px;height:1px;background:#555"></div>
<div class="a" style="left:8px;top:605px;width:54px;height:1px;background:#555"></div>
<div class="a" style="left:8px;top:686px;width:54px;height:1px;background:#555"></div>
<div class="a" style="left:8px;top:839px;width:54px;height:1px;background:#555"></div>
<div class="a" style="left:2px;top:565px;width:33px;height:34px;background:#52728f;border:1px solid #3a4a5a;border-radius:3px"></div>
<svg style="left:6px;top:148px" width="24" height="24" viewBox="0 0 24 24"><path d="M5 2 L5 20 L9 16 L13 23 L16 21.5 L12.5 15 L18 14.5 Z" fill="#d2d2d2"/></svg>
<svg style="left:42px;top:148px" width="24" height="24" viewBox="0 0 24 24"><path d="M3 2 H21 V7 M3 2 V7 M12 2 V22 M8 22 H16" fill="none" stroke="#d2d2d2" stroke-width="2.2" stroke-width="2.6"/></svg>
<svg style="left:6px;top:184px" width="24" height="24" viewBox="0 0 24 24"><path d="M4 18 V10 Q4 4 12 3 H19" fill="none" stroke="#d2d2d2" stroke-width="2.2"/><rect x="1.5" y="17" width="5" height="5" fill="none" stroke="#d2d2d2" stroke-width="2.2" stroke-width="1.6"/><rect x="18" y="1" width="5" height="5" fill="none" stroke="#d2d2d2" stroke-width="2.2" stroke-width="1.6"/><path d="M11 9 L11 22 L14 19 L17 22 L20 20 L17 17 L21 16 Z" fill="#d2d2d2"/></svg>
<svg style="left:42px;top:184px" width="24" height="24" viewBox="0 0 24 24"><path d="M4 22 L9 11 L15 6 L19 10 L13 16 Z" fill="#d2d2d2"/><path d="M15 4 L18 1.5 L22.5 6 L20 8.5 Z" fill="#d2d2d2"/><path d="M4 22 L10 15" stroke="#4a4a4a" stroke-width="1.5"/></svg>
<svg style="left:6px;top:228px" width="24" height="24" viewBox="0 0 24 24"><path d="M14 9 L21 2 L23 4 L16 11 Z" fill="#d2d2d2"/><path d="M13 10 Q7 9 5 15 Q4 20 1 22 Q10 23 14 18 Q16 14 14 11 Z" fill="#d2d2d2"/></svg>
<svg style="left:42px;top:228px" width="24" height="24" viewBox="0 0 24 24"><path d="M3 21 L21 3" fill="none" stroke="#d2d2d2" stroke-width="2.2" stroke-width="2.4"/></svg>
<svg style="left:6px;top:264px" width="24" height="24" viewBox="0 0 24 24"><rect x="2" y="2" width="20" height="20" fill="none" stroke="#d2d2d2" stroke-width="2.2"/></svg>
<svg style="left:42px;top:264px" width="24" height="24" viewBox="0 0 24 24"><circle cx="12" cy="12" r="10" fill="none" stroke="#d2d2d2" stroke-width="2.2"/></svg>
<svg style="left:6px;top:300px" width="24" height="24" viewBox="0 0 24 24"><path d="M2 22 V10 L9 2 H22 V13 L14 22 Z" fill="none" stroke="#d2d2d2" stroke-width="2.2"/></svg>
<svg style="left:42px;top:300px" width="24" height="24" viewBox="0 0 24 24"><path d="M12 1 L9 6 L3 22 L22 13 L6 8" fill="none" stroke="#d2d2d2" stroke-width="2.2"/></svg>
<svg style="left:6px;top:336px" width="24" height="24" viewBox="0 0 24 24"><path d="M3 22 V14 Q4 4 12 4 Q20 4 21 14 V22" fill="none" stroke="#d2d2d2" stroke-width="2.2"/><circle cx="4" cy="3" r="2" fill="#d2d2d2"/><circle cx="20" cy="3" r="2" fill="#d2d2d2"/><rect x="9.5" y="1.5" width="5" height="5" fill="#d2d2d2"/><path d="M4 3 H20" stroke="#d2d2d2" stroke-width="1.2"/></svg>
<svg style="left:42px;top:336px" width="24" height="24" viewBox="0 0 24 24"><path d="M4 9 Q12 4 18 6 Q14 12 14 22" fill="none" stroke="#d2d2d2" stroke-width="2.2"/><rect x="1" y="6" width="5" height="5" fill="none" stroke="#d2d2d2" stroke-width="2.2" stroke-width="1.6"/><rect x="18" y="1" width="5" height="5" fill="none" stroke="#d2d2d2" stroke-width="2.2" stroke-width="1.6"/><rect x="12" y="18" width="5" height="5" fill="none" stroke="#d2d2d2" stroke-width="2.2" stroke-width="1.6"/></svg>
<svg style="left:6px;top:372px" width="24" height="24" viewBox="0 0 24 24"><path d="M2 21 Q14 19 20 12 Q22 6 15 4 Q10 3 5 6" fill="none" stroke="#d2d2d2" stroke-width="2.2"/><circle cx="12" cy="10" r="1.8" fill="#d2d2d2"/></svg>
<svg style="left:42px;top:372px" width="24" height="24" viewBox="0 0 24 24"><path d="M10 9 L22 1 L16 13 Z M8 14 L22 1 M13 17 L22 1" fill="none" stroke="#d2d2d2" stroke-width="2.2" stroke-width="1.8"/><circle cx="5" cy="9" r="3" fill="#d2d2d2"/><circle cx="6" cy="15" r="3" fill="#d2d2d2"/><circle cx="11" cy="20" r="3" fill="#d2d2d2"/></svg>
<svg style="left:6px;top:417px" width="24" height="24" viewBox="0 0 24 24"><rect x="3" y="3" width="18" height="18" fill="none" stroke="#d2d2d2" stroke-width="2.2" stroke-dasharray="4 2"/><rect x="1" y="1" width="5" height="5" fill="#d2d2d2"/><rect x="18" y="1" width="5" height="5" fill="#d2d2d2"/><rect x="1" y="18" width="5" height="5" fill="#d2d2d2"/><rect x="18" y="18" width="5" height="5" fill="#d2d2d2"/><rect x="10.5" y="10.5" width="3" height="3" fill="#d2d2d2"/></svg>
<svg style="left:42px;top:417px" width="24" height="24" viewBox="0 0 24 24"><path d="M12 2 V22 M2 12 H22" fill="none" stroke="#d2d2d2" stroke-width="2.2"/><path d="M12 0 L16 5 H8 Z M12 24 L16 19 H8 Z M0 12 L5 8 V16 Z M24 12 L19 8 V16 Z" fill="#d2d2d2"/></svg>
<svg style="left:6px;top:453px" width="24" height="24" viewBox="0 0 24 24"><path d="M6 1 V18 H23 M1 6 H18 V23" fill="none" stroke="#d2d2d2" stroke-width="2.2" stroke-width="2.4"/></svg>
<svg style="left:6px;top:498px" width="24" height="24" viewBox="0 0 24 24"><defs><linearGradient id="grd" x1="0" y1="0" x2="1" y2="1"><stop offset="0" stop-color="#222"/><stop offset="1" stop-color="#eee"/></linearGradient></defs><rect x="2" y="2" width="20" height="20" fill="url(#grd)" stroke="#d2d2d2" stroke-width="1.6"/></svg>
<svg style="left:42px;top:498px" width="24" height="24" viewBox="0 0 24 24"><path d="M15 5 L19 9 L7 21 L3 21 L3 17 Z" fill="none" stroke="#d2d2d2" stroke-width="2.2" stroke-width="1.8"/><path d="M14 4 L18 0.5 Q22 0 23 4 Q23 6 20 10 Z" fill="#d2d2d2"/></svg>
<svg style="left:6px;top:533px" width="24" height="24" viewBox="0 0 24 24"><path d="M9 15 L20 4 L22 6 L11 17 Z" fill="#d2d2d2"/><circle cx="9" cy="15" r="3.5" fill="#d2d2d2"/><circle cx="22.0" cy="12.0" r="1.4" fill="#d2d2d2"/><circle cx="19.1" cy="19.1" r="1.4" fill="#d2d2d2"/><circle cx="12.0" cy="22.0" r="1.4" fill="#d2d2d2"/><circle cx="4.9" cy="19.1" r="1.4" fill="#d2d2d2"/><circle cx="2.0" cy="12.0" r="1.4" fill="#d2d2d2"/><circle cx="4.9" cy="4.9" r="1.4" fill="#d2d2d2"/><circle cx="12.0" cy="2.0" r="1.4" fill="#d2d2d2"/><circle cx="19.1" cy="4.9" r="1.4" fill="#d2d2d2"/></svg>
<svg style="left:42px;top:533px" width="24" height="24" viewBox="0 0 24 24"><path d="M4 20 L20 4" fill="none" stroke="#d2d2d2" stroke-width="2.2" stroke-width="3"/><path d="M2 6 L6 2 L10 6 L6 10 Z M14 18 L18 14 L22 18 L18 22 Z" fill="#d2d2d2"/></svg>
<svg style="left:6px;top:570px" width="24" height="24" viewBox="0 0 24 24"><path d="M3 10 H19 L16 20 H6 Z" fill="#e8e8e8"/><path d="M3 10 L9 3 L19 10" fill="none" stroke="#e8e8e8" stroke-width="2"/><path d="M6 10 Q12 6 16 10" fill="#52728f"/><path d="M20 13 Q22 17 21 19 Q19 20 19 17 Z" fill="#e8e8e8"/></svg>
<svg style="left:42px;top:570px" width="24" height="24" viewBox="0 0 24 24"><circle cx="12" cy="12" r="10" fill="none" stroke="#d2d2d2" stroke-width="2.2" stroke-dasharray="3 2"/><circle cx="12" cy="12" r="5.5" fill="none" stroke="#d2d2d2" stroke-width="2.2" stroke-width="2"/><path d="M6.5 12 H17.5" stroke="#d2d2d2" stroke-width="2"/></svg>
<svg style="left:6px;top:616px" width="24" height="24" viewBox="0 0 24 24"><circle cx="12" cy="12" r="7" fill="none" stroke="#d2d2d2" stroke-width="2.2" stroke-width="1.8"/><path d="M2 2 L22 22 M22 2 L2 22" fill="none" stroke="#d2d2d2" stroke-width="2.2" stroke-width="2.2"/></svg>
<svg style="left:42px;top:616px" width="24" height="24" viewBox="0 0 24 24"><path d="M21 3 L3 21 H21" fill="none" stroke="#d2d2d2" stroke-width="2.2" stroke-width="2.4"/><path d="M13 21 Q14 15 9 13" fill="none" stroke="#d2d2d2" stroke-width="2.2" stroke-width="1.8"/></svg>
<svg style="left:6px;top:651px" width="24" height="24" viewBox="0 0 24 24"><path d="M13 3 L21 11 L17 12 L13 16 L12 20 L4 12 L8 11 L12 7 Z" fill="#d2d2d2"/><path d="M2 22 L9 15" fill="none" stroke="#d2d2d2" stroke-width="2.2"/></svg>
<svg style="left:6px;top:696px" width="24" height="24" viewBox="0 0 24 24"><rect x="2" y="2" width="20" height="20" fill="none" stroke="#d2d2d2" stroke-width="2.2" stroke-dasharray="5 3"/></svg>
<svg style="left:42px;top:696px" width="24" height="24" viewBox="0 0 24 24"><circle cx="12" cy="12" r="10" fill="none" stroke="#d2d2d2" stroke-width="2.2" stroke-dasharray="4 3"/></svg>
<svg style="left:6px;top:732px" width="24" height="24" viewBox="0 0 24 24"><path d="M2 22 V10 L9 2 H22 V13 L14 22 Z" fill="none" stroke="#d2d2d2" stroke-width="2.2" stroke-dasharray="5 3"/></svg>
<svg style="left:42px;top:732px" width="24" height="24" viewBox="0 0 24 24"><path d="M3 8 Q8 1 15 3 Q22 6 21 14 Q20 22 15 22 M3 8 Q5 14 10 12 Q14 10 12 6" fill="none" stroke="#d2d2d2" stroke-width="2.2" stroke-dasharray="4 3"/></svg>
<svg style="left:6px;top:768px" width="24" height="24" viewBox="0 0 24 24"><path d="M11 11 L22 22" fill="none" stroke="#d2d2d2" stroke-width="2.2" stroke-width="2.6"/><path d="M8 1 V15 M1 8 H15 M3 3 L13 13 M13 3 L3 13" fill="none" stroke="#d2d2d2" stroke-width="2.2" stroke-width="2"/></svg>
<svg style="left:42px;top:768px" width="24" height="24" viewBox="0 0 24 24"><path d="M2 8 V2 H8 M16 22 H22 V16 M2 16 V22 H6 M22 8 V2 H18" fill="none" stroke="#d2d2d2" stroke-width="2.2"/><path d="M7 17 L16 8 L18 10 L9 19 Z" fill="none" stroke="#d2d2d2" stroke-width="2.2" stroke-width="1.6"/><path d="M15 7 L19 3 Q22 3 21 6 L17 10 Z" fill="#d2d2d2"/></svg>
<svg style="left:6px;top:804px" width="24" height="24" viewBox="0 0 24 24"><path d="M2 6 V14 Q3 22 12 22 Q21 22 22 14 V6" fill="none" stroke="#d2d2d2" stroke-width="2.2" stroke-dasharray="4 3"/><circle cx="3" cy="4" r="2.5" fill="#d2d2d2"/><circle cx="21" cy="4" r="2.5" fill="#d2d2d2"/><circle cx="12" cy="4" r="2.5" fill="#d2d2d2"/><path d="M3 4 H21" stroke="#d2d2d2" stroke-width="1.4"/></svg>
<svg style="left:42px;top:804px" width="24" height="24" viewBox="0 0 24 24"><path d="M2 8 V2 H8 M16 22 H22 V16 M2 16 V22 H8 M22 8 V2 H16" fill="none" stroke="#d2d2d2" stroke-width="2.2"/><path d="M7 17 Q6 6 13 5 Q19 6 16 13" fill="none" stroke="#d2d2d2" stroke-width="2.2" stroke-dasharray="3 2" stroke-width="1.8"/></svg>
<svg style="left:6px;top:849px" width="24" height="24" viewBox="0 0 24 24"><circle cx="9" cy="9" r="6.5" fill="none" stroke="#d2d2d2" stroke-width="2.2" stroke-width="2.6"/><path d="M13.5 13.5 L22 22" fill="none" stroke="#d2d2d2" stroke-width="2.2" stroke-width="3.2"/></svg>
<svg style="left:42px;top:849px" width="24" height="24" viewBox="0 0 24 24"><path d="M5 13 V6 Q5 4 7 4 Q8.5 4 8.5 6 V3 Q8.5 1 10.5 1 Q12.5 1 12.5 3 V3 Q12.5 1.5 14.5 1.5 Q16.5 1.5 16.5 3.5 V5 Q16.5 3.5 18.5 3.5 Q20.5 3.5 20.5 5.5 V17 Q20.5 23 14 23 H11 Q7 23 5 19 L2 14 Q1.5 11 4 12 Z" fill="#d2d2d2"/><path d="M8.5 6 V12 M12.5 3 V12 M16.5 5 V12" stroke="#4a4a4a" stroke-width="1.2"/></svg>
<svg style="left:1619px;top:120px" width="19" height="19" viewBox="0 0 19 19"><circle cx="9.5" cy="9.5" r="8.5" fill="none" stroke="#d2d2d2" stroke-width="1.5"/><rect x="5" y="9" width="9" height="5.5" fill="#d2d2d2"/><path d="M6.5 9 V6.5 Q6.5 4 9.5 4 Q12 4 12.5 6" fill="none" stroke="#d2d2d2" stroke-width="1.5"/></svg>
<div class="t" style="left:1649px;top:121px;font-size:16.2px;color:#d8d8d8;">Advanced Color Selector</div>
<svg style="left:1944px;top:121px" width="17" height="16" viewBox="0 0 17 16"><rect x="1" y="6" width="9" height="9" fill="none" stroke="#d2d2d2" stroke-width="1.6"/><path d="M6 6 V1 H16 V10 H10" fill="none" stroke="#d2d2d2" stroke-width="1.6"/></svg>
<svg style="left:1978px;top:123px" width="13" height="13" viewBox="0 0 13 13"><path d="M1 1 L12 12 M12 1 L1 12" stroke="#d2d2d2" stroke-width="1.8"/></svg>
<svg style="left:1977px;top:147px" width="16" height="16" viewBox="0 0 16 16"><circle cx="8" cy="8" r="6.5" fill="none" stroke="#d2d2d2" stroke-width="2"/><path d="M3.5 3.5 L12.5 12.5" stroke="#d2d2d2" stroke-width="2"/></svg>
<svg style="left:1628px;top:157px" width="19" height="19" viewBox="0 0 19 19"><rect x="1" y="1" width="17" height="17" fill="none" stroke="#d2d2d2" stroke-width="1.5"/><path d="M1 4.5 H18" stroke="#d2d2d2" stroke-width="1.5"/><rect x="4" y="7" width="2.5" height="8" fill="#d2d2d2"/><path d="M8 8.5 H15 M8 11.5 H15 M8 14 H15" stroke="#d2d2d2" stroke-width="1.5"/></svg>
<div class="a" style="left:1974px;top:167px;width:24px;height:24px;background:#ffffff"></div>
<div class="a" style="left:1974px;top:191px;width:24px;height:24px;background:#fecfcb"></div>
<div class="a" style="left:1974px;top:215px;width:24px;height:24px;background:#fcc0f0"></div>
<div class="a" style="left:1974px;top:239px;width:24px;height:24px;background:#ff00cc"></div>
<div class="a" style="left:1974px;top:263px;width:24px;height:24px;background:#0000ff"></div>
<div class="a" style="left:1974px;top:287px;width:24px;height:24px;background:#ff0000"></div>
<div class="a" style="left:1974px;top:311px;width:24px;height:24px;background:#000000"></div>
<div class="a" style="left:1646px;top:143px;width:296px;height:296px;border-radius:50%;background:conic-gradient(from 0deg,#80ff00 0deg,#00ff00 30deg,#00ff80 60deg,#00ffff 90deg,#0080ff 120deg,#0000ff 150deg,#8000ff 180deg,#ff00ff 210deg,#ff0080 240deg,#ff0000 270deg,#ff8000 300deg,#ffff00 330deg,#80ff00 360deg)"></div>
<div class="a" style="left:1670px;top:167px;width:248px;height:248px;border-radius:50%;background:#4a4a4a"></div>
<svg style="left:0;top:0" width="2000" height="400" viewBox="0 0 2000 400"><defs><linearGradient id="tr0" x1="1793.87" x2="1796.15" y1="0" y2="0" gradientUnits="userSpaceOnUse"><stop offset="0" stop-color="rgb(3,3,3)"/><stop offset="1" stop-color="rgb(3,0,0)"/></linearGradient><linearGradient id="tr1" x1="1791.61" x2="1798.46" y1="0" y2="0" gradientUnits="userSpaceOnUse"><stop offset="0" stop-color="rgb(8,8,8)"/><stop offset="1" stop-color="rgb(8,1,0)"/></linearGradient><linearGradient id="tr2" x1="1789.35" x2="1800.76" y1="0" y2="0" gradientUnits="userSpaceOnUse"><stop offset="0" stop-color="rgb(14,14,14)"/><stop offset="1" stop-color="rgb(14,1,0)"/></linearGradient><linearGradient id="tr3" x1="1787.09" x2="1803.07" y1="0" y2="0" gradientUnits="userSpaceOnUse"><stop offset="0" stop-color="rgb(19,19,19)"/><stop offset="1" stop-color="rgb(19,2,0)"/></linearGradient><linearGradient id="tr4" x1="1784.83" x2="1805.37" y1="0" y2="0" gradientUnits="userSpaceOnUse"><stop offset="0" stop-color="rgb(25,25,25)"/><stop offset="1" stop-color="rgb(25,3,0)"/></linearGradient><linearGradient id="tr5" x1="1782.57" x2="1807.67" y1="0" y2="0" gradientUnits="userSpaceOnUse"><stop offset="0" stop-color="rgb(30,30,30)"/><stop offset="1" stop-color="rgb(30,3,0)"/></linearGradient><linearGradient id="tr6" x1="1780.30" x2="1809.98" y1="0" y2="0" gradientUnits="userSpaceOnUse"><stop offset="0" stop-color="rgb(36,36,36)"/><stop offset="1" stop-color="rgb(36,4,0)"/></linearGradient><linearGradient id="tr7" x1="1778.04" x2="1812.28" y1="0" y2="0" gradientUnits="userSpaceOnUse"><stop offset="0" stop-color="rgb(42,42,42)"/><stop offset="1" stop-color="rgb(42,4,0)"/></linearGradient><linearGradient id="tr8" x1="1775.78" x2="1814.59" y1="0" y2="0" gradientUnits="userSpaceOnUse"><stop offset="0" stop-color="rgb(47,47,47)"/><stop offset="1" stop-color="rgb(47,5,0)"/></linearGradient><linearGradient id="tr9" x1="1773.52" x2="1816.89" y1="0" y2="0" gradientUnits="userSpaceOnUse"><stop offset="0" stop-color="rgb(53,53,53)"/><stop offset="1" stop-color="rgb(53,5,0)"/></linearGradient><linearGradient id="tr10" x1="1771.26" x2="1819.20" y1="0" y2="0" gradientUnits="userSpaceOnUse"><stop offset="0" stop-color="rgb(58,58,58)"/><stop offset="1" stop-color="rgb(58,6,0)"/></linearGradient><linearGradient id="tr11" x1="1769.00" x2="1821.50" y1="0" y2="0" gradientUnits="userSpaceOnUse"><stop offset="0" stop-color="rgb(64,64,64)"/><stop offset="1" stop-color="rgb(64,6,0)"/></linearGradient><linearGradient id="tr12" x1="1766.74" x2="1823.80" y1="0" y2="0" gradientUnits="userSpaceOnUse"><stop offset="0" stop-color="rgb(69,69,69)"/><stop offset="1" stop-color="rgb(69,7,0)"/></linearGradient><linearGradient id="tr13" x1="1764.48" x2="1826.11" y1="0" y2="0" gradientUnits="userSpaceOnUse"><stop offset="0" stop-color="rgb(75,75,75)"/><stop offset="1" stop-color="rgb(75,8,0)"/></linearGradient><linearGradient id="tr14" x1="1762.22" x2="1828.41" y1="0" y2="0" gradientUnits="userSpaceOnUse"><stop offset="0" stop-color="rgb(80,80,80)"/><stop offset="1" stop-color="rgb(80,8,0)"/></linearGradient><linearGradient id="tr15" x1="1759.96" x2="1830.72" y1="0" y2="0" gradientUnits="userSpaceOnUse"><stop offset="0" stop-color="rgb(86,86,86)"/><stop offset="1" stop-color="rgb(86,9,0)"/></linearGradient><linearGradient id="tr16" x1="1757.70" x2="1833.02" y1="0" y2="0" gradientUnits="userSpaceOnUse"><stop offset="0" stop-color="rgb(91,91,91)"/><stop offset="1" stop-color="rgb(91,9,0)"/></linearGradient><linearGradient id="tr17" x1="1755.43" x2="1835.33" y1="0" y2="0" gradientUnits="userSpaceOnUse"><stop offset="0" stop-color="rgb(97,97,97)"/><stop offset="1" stop-color="rgb(97,10,0)"/></linearGradient><linearGradient id="tr18" x1="1753.17" x2="1837.63" y1="0" y2="0" gradientUnits="userSpaceOnUse"><stop offset="0" stop-color="rgb(103,103,103)"/><stop offset="1" stop-color="rgb(103,10,0)"/></linearGradient><linearGradient id="tr19" x1="1750.91" x2="1839.93" y1="0" y2="0" gradientUnits="userSpaceOnUse"><stop offset="0" stop-color="rgb(108,108,108)"/><stop offset="1" stop-color="rgb(108,11,0)"/></linearGradient><linearGradient id="tr20" x1="1748.65" x2="1842.24" y1="0" y2="0" gradientUnits="userSpaceOnUse"><stop offset="0" stop-color="rgb(114,114,114)"/><stop offset="1" stop-color="rgb(114,12,0)"/></linearGradient><linearGradient id="tr21" x1="1746.39" x2="1844.54" y1="0" y2="0" gradientUnits="userSpaceOnUse"><stop offset="0" stop-color="rgb(119,119,119)"/><stop offset="1" stop-color="rgb(119,12,0)"/></linearGradient><linearGradient id="tr22" x1="1744.13" x2="1846.85" y1="0" y2="0" gradientUnits="userSpaceOnUse"><stop offset="0" stop-color="rgb(125,125,125)"/><stop offset="1" stop-color="rgb(125,13,0)"/></linearGradient><linearGradient id="tr23" x1="1741.87" x2="1849.15" y1="0" y2="0" gradientUnits="userSpaceOnUse"><stop offset="0" stop-color="rgb(130,130,130)"/><stop offset="1" stop-color="rgb(130,13,0)"/></linearGradient><linearGradient id="tr24" x1="1739.61" x2="1851.46" y1="0" y2="0" gradientUnits="userSpaceOnUse"><stop offset="0" stop-color="rgb(136,136,136)"/><stop offset="1" stop-color="rgb(136,14,0)"/></linearGradient><linearGradient id="tr25" x1="1737.35" x2="1853.76" y1="0" y2="0" gradientUnits="userSpaceOnUse"><stop offset="0" stop-color="rgb(141,141,141)"/><stop offset="1" stop-color="rgb(141,14,0)"/></linearGradient><linearGradient id="tr26" x1="1735.09" x2="1856.07" y1="0" y2="0" gradientUnits="userSpaceOnUse"><stop offset="0" stop-color="rgb(147,147,147)"/><stop offset="1" stop-color="rgb(147,15,0)"/></linearGradient><linearGradient id="tr27" x1="1732.83" x2="1858.37" y1="0" y2="0" gradientUnits="userSpaceOnUse"><stop offset="0" stop-color="rgb(152,152,152)"/><stop offset="1" stop-color="rgb(152,16,0)"/></linearGradient><linearGradient id="tr28" x1="1730.57" x2="1860.67" y1="0" y2="0" gradientUnits="userSpaceOnUse"><stop offset="0" stop-color="rgb(158,158,158)"/><stop offset="1" stop-color="rgb(158,16,0)"/></linearGradient><linearGradient id="tr29" x1="1728.30" x2="1862.98" y1="0" y2="0" gradientUnits="userSpaceOnUse"><stop offset="0" stop-color="rgb(164,164,164)"/><stop offset="1" stop-color="rgb(164,17,0)"/></linearGradient><linearGradient id="tr30" x1="1726.04" x2="1865.28" y1="0" y2="0" gradientUnits="userSpaceOnUse"><stop offset="0" stop-color="rgb(169,169,169)"/><stop offset="1" stop-color="rgb(169,17,0)"/></linearGradient><linearGradient id="tr31" x1="1723.78" x2="1867.59" y1="0" y2="0" gradientUnits="userSpaceOnUse"><stop offset="0" stop-color="rgb(175,175,175)"/><stop offset="1" stop-color="rgb(175,18,0)"/></linearGradient><linearGradient id="tr32" x1="1721.52" x2="1869.89" y1="0" y2="0" gradientUnits="userSpaceOnUse"><stop offset="0" stop-color="rgb(180,180,180)"/><stop offset="1" stop-color="rgb(180,18,0)"/></linearGradient><linearGradient id="tr33" x1="1719.26" x2="1872.20" y1="0" y2="0" gradientUnits="userSpaceOnUse"><stop offset="0" stop-color="rgb(186,186,186)"/><stop offset="1" stop-color="rgb(186,19,0)"/></linearGradient><linearGradient id="tr34" x1="1717.00" x2="1874.50" y1="0" y2="0" gradientUnits="userSpaceOnUse"><stop offset="0" stop-color="rgb(191,191,191)"/><stop offset="1" stop-color="rgb(191,20,0)"/></linearGradient><linearGradient id="tr35" x1="1714.74" x2="1876.80" y1="0" y2="0" gradientUnits="userSpaceOnUse"><stop offset="0" stop-color="rgb(197,197,197)"/><stop offset="1" stop-color="rgb(197,20,0)"/></linearGradient><linearGradient id="tr36" x1="1712.48" x2="1879.11" y1="0" y2="0" gradientUnits="userSpaceOnUse"><stop offset="0" stop-color="rgb(202,202,202)"/><stop offset="1" stop-color="rgb(202,21,0)"/></linearGradient><linearGradient id="tr37" x1="1710.22" x2="1881.41" y1="0" y2="0" gradientUnits="userSpaceOnUse"><stop offset="0" stop-color="rgb(208,208,208)"/><stop offset="1" stop-color="rgb(208,21,0)"/></linearGradient><linearGradient id="tr38" x1="1707.96" x2="1883.72" y1="0" y2="0" gradientUnits="userSpaceOnUse"><stop offset="0" stop-color="rgb(213,213,213)"/><stop offset="1" stop-color="rgb(213,22,0)"/></linearGradient><linearGradient id="tr39" x1="1705.70" x2="1886.02" y1="0" y2="0" gradientUnits="userSpaceOnUse"><stop offset="0" stop-color="rgb(219,219,219)"/><stop offset="1" stop-color="rgb(219,22,0)"/></linearGradient><linearGradient id="tr40" x1="1703.43" x2="1888.33" y1="0" y2="0" gradientUnits="userSpaceOnUse"><stop offset="0" stop-color="rgb(225,225,225)"/><stop offset="1" stop-color="rgb(225,23,0)"/></linearGradient><linearGradient id="tr41" x1="1701.17" x2="1890.63" y1="0" y2="0" gradientUnits="userSpaceOnUse"><stop offset="0" stop-color="rgb(230,230,230)"/><stop offset="1" stop-color="rgb(230,23,0)"/></linearGradient><linearGradient id="tr42" x1="1698.91" x2="1892.93" y1="0" y2="0" gradientUnits="userSpaceOnUse"><stop offset="0" stop-color="rgb(236,236,236)"/><stop offset="1" stop-color="rgb(236,24,0)"/></linearGradient><linearGradient id="tr43" x1="1696.65" x2="1895.24" y1="0" y2="0" gradientUnits="userSpaceOnUse"><stop offset="0" stop-color="rgb(241,241,241)"/><stop offset="1" stop-color="rgb(241,25,0)"/></linearGradient><linearGradient id="tr44" x1="1694.39" x2="1897.54" y1="0" y2="0" gradientUnits="userSpaceOnUse"><stop offset="0" stop-color="rgb(247,247,247)"/><stop offset="1" stop-color="rgb(247,25,0)"/></linearGradient><linearGradient id="tr45" x1="1692.13" x2="1899.85" y1="0" y2="0" gradientUnits="userSpaceOnUse"><stop offset="0" stop-color="rgb(252,252,252)"/><stop offset="1" stop-color="rgb(252,26,0)"/></linearGradient><clipPath id="trc"><path d="M1795.0 167.0 L1691.0 352.0 L1901.0 352.0 Z"/></clipPath></defs><g clip-path="url(#trc)"><rect x="1689.0" y="167.00" width="214.0" height="4.62" fill="url(#tr0)"/><rect x="1689.0" y="171.02" width="214.0" height="4.62" fill="url(#tr1)"/><rect x="1689.0" y="175.04" width="214.0" height="4.62" fill="url(#tr2)"/><rect x="1689.0" y="179.07" width="214.0" height="4.62" fill="url(#tr3)"/><rect x="1689.0" y="183.09" width="214.0" height="4.62" fill="url(#tr4)"/><rect x="1689.0" y="187.11" width="214.0" height="4.62" fill="url(#tr5)"/><rect x="1689.0" y="191.13" width="214.0" height="4.62" fill="url(#tr6)"/><rect x="1689.0" y="195.15" width="214.0" height="4.62" fill="url(#tr7)"/><rect x="1689.0" y="199.17" width="214.0" height="4.62" fill="url(#tr8)"/><rect x="1689.0" y="203.20" width="214.0" height="4.62" fill="url(#tr9)"/><rect x="1689.0" y="207.22" width="214.0" height="4.62" fill="url(#tr10)"/><rect x="1689.0" y="211.24" width="214.0" height="4.62" fill="url(#tr11)"/><rect x="1689.0" y="215.26" width="214.0" height="4.62" fill="url(#tr12)"/><rect x="1689.0" y="219.28" width="214.0" height="4.62" fill="url(#tr13)"/><rect x="1689.0" y="223.30" width="214.0" height="4.62" fill="url(#tr14)"/><rect x="1689.0" y="227.33" width="214.0" height="4.62" fill="url(#tr15)"/><rect x="1689.0" y="231.35" width="214.0" height="4.62" fill="url(#tr16)"/><rect x="1689.0" y="235.37" width="214.0" height="4.62" fill="url(#tr17)"/><rect x="1689.0" y="239.39" width="214.0" height="4.62" fill="url(#tr18)"/><rect x="1689.0" y="243.41" width="214.0" height="4.62" fill="url(#tr19)"/><rect x="1689.0" y="247.43" width="214.0" height="4.62" fill="url(#tr20)"/><rect x="1689.0" y="251.46" width="214.0" height="4.62" fill="url(#tr21)"/><rect x="1689.0" y="255.48" width="214.0" height="4.62" fill="url(#tr22)"/><rect x="1689.0" y="259.50" width="214.0" height="4.62" fill="url(#tr23)"/><rect x="1689.0" y="263.52" width="214.0" height="4.62" fill="url(#tr24)"/><rect x="1689.0" y="267.54" width="214.0" height="4.62" fill="url(#tr25)"/><rect x="1689.0" y="271.57" width="214.0" height="4.62" fill="url(#tr26)"/><rect x="1689.0" y="275.59" width="214.0" height="4.62" fill="url(#tr27)"/><rect x="1689.0" y="279.61" width="214.0" height="4.62" fill="url(#tr28)"/><rect x="1689.0" y="283.63" width="214.0" height="4.62" fill="url(#tr29)"/><rect x="1689.0" y="287.65" width="214.0" height="4.62" fill="url(#tr30)"/><rect x="1689.0" y="291.67" width="214.0" height="4.62" fill="url(#tr31)"/><rect x="1689.0" y="295.70" width="214.0" height="4.62" fill="url(#tr32)"/><rect x="1689.0" y="299.72" width="214.0" height="4.62" fill="url(#tr33)"/><rect x="1689.0" y="303.74" width="214.0" height="4.62" fill="url(#tr34)"/><rect x="1689.0" y="307.76" width="214.0" height="4.62" fill="url(#tr35)"/><rect x="1689.0" y="311.78" width="214.0" height="4.62" fill="url(#tr36)"/><rect x="1689.0" y="315.80" width="214.0" height="4.62" fill="url(#tr37)"/><rect x="1689.0" y="319.83" width="214.0" height="4.62" fill="url(#tr38)"/><rect x="1689.0" y="323.85" width="214.0" height="4.62" fill="url(#tr39)"/><rect x="1689.0" y="327.87" width="214.0" height="4.62" fill="url(#tr40)"/><rect x="1689.0" y="331.89" width="214.0" height="4.62" fill="url(#tr41)"/><rect x="1689.0" y="335.91" width="214.0" height="4.62" fill="url(#tr42)"/><rect x="1689.0" y="339.93" width="214.0" height="4.62" fill="url(#tr43)"/><rect x="1689.0" y="343.96" width="214.0" height="4.62" fill="url(#tr44)"/><rect x="1689.0" y="347.98" width="214.0" height="4.62" fill="url(#tr45)"/></g></svg>
<svg style="left:1645px;top:268px" width="28" height="12" viewBox="0 0 28 12"><path d="M1 5 L26 8" stroke="#fff" stroke-width="3"/><path d="M1 5 L26 8" stroke="#333" stroke-width="0.8"/></svg>
<svg style="left:1679px;top:345px" width="16" height="16" viewBox="0 0 16 16"><circle cx="8" cy="8" r="6" fill="none" stroke="#000" stroke-width="2"/><circle cx="8" cy="8" r="4.5" fill="none" stroke="#fff" stroke-width="1"/></svg>
<div class="a" style="left:1614px;top:441px;width:360px;height:15px;background:#fff;border:1px solid #333"></div>
<div class="a" style="left:1614px;top:457px;width:360px;height:16px;background:linear-gradient(90deg,#7c7c7c 0%,#ffffff 50%,#ff8a8a 100%);border:1px solid #333"></div>
<div class="a" style="left:1614px;top:473px;width:360px;height:16px;background:linear-gradient(90deg,#6e2b2b 0%,#f6eaea 48%,#ffffff 50%,#ffffff 100%);border:1px solid #333"></div>
<div class="a" style="left:1787px;top:440px;width:14px;height:17px;border:2px solid #222;background:#fff"></div>
<div class="a" style="left:1787px;top:456px;width:14px;height:17px;border:2px solid #222;background:#fff"></div>
<div class="a" style="left:1787px;top:472px;width:14px;height:17px;border:2px solid #222;background:#fff"></div>
<svg style="left:1617px;top:497px" width="19" height="19" viewBox="0 0 19 19"><path d="M3 10 A6.5 6.5 0 0 1 14 4.5" fill="none" stroke="#d2d2d2" stroke-width="2.2"/><path d="M16 9 A6.5 6.5 0 0 1 5 14.5" fill="none" stroke="#d2d2d2" stroke-width="2.2"/><path d="M12 1.5 L17 3 L14.5 7.5 Z" fill="#d2d2d2"/><path d="M7 17.5 L2 16 L4.5 11.5 Z" fill="#d2d2d2"/></svg>
<svg style="left:1797px;top:520px" width="26" height="3" viewBox="0 0 26 3"><rect x="0.0" y="0" width="3" height="2.5" fill="#8a8a8a"/><rect x="4.3" y="0" width="3" height="2.5" fill="#8a8a8a"/><rect x="8.6" y="0" width="3" height="2.5" fill="#8a8a8a"/><rect x="12.899999999999999" y="0" width="3" height="2.5" fill="#8a8a8a"/><rect x="17.2" y="0" width="3" height="2.5" fill="#8a8a8a"/><rect x="21.5" y="0" width="3" height="2.5" fill="#8a8a8a"/></svg>
<div class="a" style="left:1607px;top:557px;width:393px;height:1px;background:#3a3a3a"></div>
<div class="a" style="left:1614px;top:526px;width:74px;height:32px;background:#4e4e4e;border:1px solid #3a3a3a;border-bottom:none;border-radius:3px 3px 0 0"></div>
<div class="t" style="left:1627px;top:535px;font-size:16.4px;color:#e0e0e0;">Layers</div>
<div class="a" style="left:1691px;top:529px;width:117px;height:28px;background:#434343;border:1px solid #3a3a3a;border-bottom:none;border-radius:3px 3px 0 0"></div>
<div class="t" style="left:1703px;top:536px;font-size:16.4px;color:#d8d8d8;">Tool Options</div>
<svg style="left:1619px;top:563px" width="19" height="19" viewBox="0 0 19 19"><circle cx="9.5" cy="9.5" r="8.5" fill="none" stroke="#d2d2d2" stroke-width="1.5"/><rect x="5" y="9" width="9" height="5.5" fill="#d2d2d2"/><path d="M6.5 9 V6.5 Q6.5 4 9.5 4 Q12 4 12.5 6" fill="none" stroke="#d2d2d2" stroke-width="1.5"/></svg>
<div class="t" style="left:1649px;top:565px;font-size:16.2px;color:#d8d8d8;">Layers</div>
<svg style="left:1944px;top:564px" width="17" height="16" viewBox="0 0 17 16"><rect x="1" y="6" width="9" height="9" fill="none" stroke="#d2d2d2" stroke-width="1.6"/><path d="M6 6 V1 H16 V10 H10" fill="none" stroke="#d2d2d2" stroke-width="1.6"/></svg>
<svg style="left:1978px;top:566px" width="13" height="13" viewBox="0 0 13 13"><path d="M1 1 L12 12 M12 1 L1 12" stroke="#d2d2d2" stroke-width="1.8"/></svg>
<div class="a" style="left:1615px;top:587px;width:333px;height:45px;background:#474747;border:1px solid #333;border-radius:3px;box-shadow:inset 0 1px 0 #555"></div>
<div class="t" style="left:1622px;top:601px;font-size:16.7px;color:#e0e0e0;">Normal</div>
<svg style="left:1927px;top:607px" width="10" height="6" viewBox="0 0 10 6"><path d="M0 0 H9 L4.5 5 Z" fill="#bdbdbd"/></svg>
<svg style="left:1610px;top:590px" width="4" height="24" viewBox="0 0 4 24"><rect x="0" y="0.0" width="3" height="2" fill="#8a8a8a"/><rect x="0" y="4.2" width="3" height="2" fill="#8a8a8a"/><rect x="0" y="8.4" width="3" height="2" fill="#8a8a8a"/><rect x="0" y="12.600000000000001" width="3" height="2" fill="#8a8a8a"/><rect x="0" y="16.8" width="3" height="2" fill="#8a8a8a"/><rect x="0" y="21.0" width="3" height="2" fill="#8a8a8a"/></svg>
<svg style="left:1963px;top:595px" width="24" height="28" viewBox="0 0 24 28"><path d="M2 2 H22 L14 13 V26 L10 23 V13 Z" fill="none" stroke="#d2d2d2" stroke-width="2"/></svg>
<svg style="left:1990px;top:625px" width="5" height="3" viewBox="0 0 5 3"><path d="M0 0 H4 L2 2.5 Z" fill="#9a9a9a"/></svg>
<div class="a" style="left:1615px;top:638px;width:333px;height:43px;background:#3c3c3c;border:1px solid #333;border-radius:3px"></div>
<div class="a" style="left:1616px;top:639px;width:316px;height:41px;background:#52728f"></div>
<div class="t" style="left:1720px;top:651px;font-size:16.4px;color:#e8e8e8;">Opacity:&nbsp;&nbsp;100%</div>
<svg style="left:1934px;top:650px" width="10" height="6" viewBox="0 0 10 6"><path d="M0 5 L5 0 L10 5 Z" fill="#6a6a6a"/></svg>
<svg style="left:1934px;top:665px" width="10" height="6" viewBox="0 0 10 6"><path d="M0 0 L5 5 L10 0 Z" fill="#9a9a9a"/></svg>
<svg style="left:1964px;top:651px" width="20" height="17" viewBox="0 0 20 17"><path d="M1 2 H19 M1 8.5 H19 M1 15 H19" stroke="#d2d2d2" stroke-width="2.6"/></svg>
<svg style="left:1990px;top:675px" width="5" height="3" viewBox="0 0 5 3"><path d="M0 0 H4 L2 2.5 Z" fill="#9a9a9a"/></svg>
<div class="a" style="left:1615px;top:684px;width:385px;height:351px;background:#3b3b3b;border:1px solid #333"></div>
<div class="a" style="left:1616px;top:724px;width:383px;height:1px;background:#363636"></div>
<svg style="left:1620px;top:694px" width="24" height="22" viewBox="0 0 24 22"><path d="M2 11 Q12 1 22 11" fill="none" stroke="#d2d2d2" stroke-width="1.6"/><path d="M2 14 Q12 24 22 14" fill="none" stroke="#d2d2d2" stroke-width="1.6"/><circle cx="12" cy="10" r="5" fill="#d2d2d2"/></svg>
<div class="a" style="left:1655px;top:692px;width:29px;height:26px;background:repeating-conic-gradient(#d8d8d8 0 25%,#fff 0 50%) 0 0/10px 10px;box-shadow:inset 0 0 0 30px #e8e8f480;"></div>
<svg style="left:1695px;top:684px" width="17" height="17" viewBox="0 0 17 17"><path d="M3 1 H15 V12 L11 16 H7 V13" fill="none" stroke="#d2d2d2" stroke-width="1.5"/><path d="M1 3 L9 10" stroke="#d2d2d2" stroke-width="1.5"/></svg>
<div class="t" style="left:1727px;top:696.6px;font-size:17px;color:#e4e4e4;letter-spacing:-0.5px">Paint Layer 4</div>
<svg style="left:1915px;top:694.0px" width="20" height="24" viewBox="0 0 20 24"><rect x="0.5" y="9.5" width="18" height="12" fill="#6e6e6e"/><path d="M9.5 1.5 Q17 2 17 9.5" fill="none" stroke="#6e6e6e" stroke-width="2.6"/></svg>
<div class="t" style="left:1941px;top:686.0px;font-size:31px;font-style:italic;font-family:Liberation Serif;color:#6e6e6e;transform:scaleX(1.15);transform-origin:0 0">α</div>
<svg style="left:1969px;top:694.0px" width="23" height="23" viewBox="0 0 23 23"><rect x="0.0" y="0.0" width="7.8" height="7.8" fill="#545454"/><rect x="7.7" y="0.0" width="7.8" height="7.8" fill="#7a7a7a"/><rect x="15.4" y="0.0" width="7.8" height="7.8" fill="#545454"/><rect x="0.0" y="7.7" width="7.8" height="7.8" fill="#7a7a7a"/><rect x="7.7" y="7.7" width="7.8" height="7.8" fill="#545454"/><rect x="15.4" y="7.7" width="7.8" height="7.8" fill="#7a7a7a"/><rect x="0.0" y="15.4" width="7.8" height="7.8" fill="#545454"/><rect x="7.7" y="15.4" width="7.8" height="7.8" fill="#7a7a7a"/><rect x="15.4" y="15.4" width="7.8" height="7.8" fill="#545454"/></svg>
<div class="a" style="left:1616px;top:764px;width:383px;height:1px;background:#363636"></div>
<svg style="left:1620px;top:734px" width="24" height="22" viewBox="0 0 24 22"><path d="M2 11 Q12 1 22 11" fill="none" stroke="#d2d2d2" stroke-width="1.6"/><path d="M2 14 Q12 24 22 14" fill="none" stroke="#d2d2d2" stroke-width="1.6"/><circle cx="12" cy="10" r="5" fill="#d2d2d2"/></svg>
<div class="a" style="left:1655px;top:733px;width:29px;height:25px;background:repeating-conic-gradient(#d8d8d8 0 25%,#fff 0 50%) 0 0/10px 10px;box-shadow:inset 0 0 0 30px #f2e6e680;"></div>
<svg style="left:1695px;top:724px" width="17" height="17" viewBox="0 0 17 17"><path d="M3 1 H15 V12 L11 16 H7 V13" fill="none" stroke="#d2d2d2" stroke-width="1.5"/><path d="M1 3 L9 10" stroke="#d2d2d2" stroke-width="1.5"/></svg>
<div class="t" style="left:1727px;top:737.1px;font-size:17px;color:#e4e4e4;letter-spacing:-0.5px">Paint Layer 3</div>
<svg style="left:1915px;top:734.5px" width="20" height="24" viewBox="0 0 20 24"><rect x="0.5" y="9.5" width="18" height="12" fill="#6e6e6e"/><path d="M9.5 1.5 Q17 2 17 9.5" fill="none" stroke="#6e6e6e" stroke-width="2.6"/></svg>
<div class="t" style="left:1941px;top:726.5px;font-size:31px;font-style:italic;font-family:Liberation Serif;color:#6e6e6e;transform:scaleX(1.15);transform-origin:0 0">α</div>
<svg style="left:1969px;top:734.5px" width="23" height="23" viewBox="0 0 23 23"><rect x="0.0" y="0.0" width="7.8" height="7.8" fill="#545454"/><rect x="7.7" y="0.0" width="7.8" height="7.8" fill="#7a7a7a"/><rect x="15.4" y="0.0" width="7.8" height="7.8" fill="#545454"/><rect x="0.0" y="7.7" width="7.8" height="7.8" fill="#7a7a7a"/><rect x="7.7" y="7.7" width="7.8" height="7.8" fill="#545454"/><rect x="15.4" y="7.7" width="7.8" height="7.8" fill="#7a7a7a"/><rect x="0.0" y="15.4" width="7.8" height="7.8" fill="#545454"/><rect x="7.7" y="15.4" width="7.8" height="7.8" fill="#7a7a7a"/><rect x="15.4" y="15.4" width="7.8" height="7.8" fill="#545454"/></svg>
<div class="a" style="left:1616px;top:805px;width:383px;height:1px;background:#363636"></div>
<svg style="left:1620px;top:775px" width="24" height="22" viewBox="0 0 24 22"><path d="M2 11 Q12 1 22 11" fill="none" stroke="#d2d2d2" stroke-width="1.6"/><path d="M2 14 Q12 24 22 14" fill="none" stroke="#d2d2d2" stroke-width="1.6"/><circle cx="12" cy="10" r="5" fill="#d2d2d2"/></svg>
<div class="a" style="left:1655px;top:776px;width:29px;height:16px;background:repeating-conic-gradient(#d8d8d8 0 25%,#fff 0 50%) 0 0/10px 10px;box-shadow:inset 0 0 0 30px #f0e8e880;"></div>
<svg style="left:1695px;top:765px" width="17" height="17" viewBox="0 0 17 17"><path d="M3 1 H15 V12 L11 16 H7 V13" fill="none" stroke="#d2d2d2" stroke-width="1.5"/><path d="M1 3 L9 10" stroke="#d2d2d2" stroke-width="1.5"/></svg>
<div class="t" style="left:1727px;top:777.6px;font-size:17px;color:#e4e4e4;letter-spacing:-0.5px">Paint Layer 1</div>
<svg style="left:1915px;top:775.0px" width="20" height="24" viewBox="0 0 20 24"><rect x="0.5" y="9.5" width="18" height="12" fill="#6e6e6e"/><path d="M9.5 1.5 Q17 2 17 9.5" fill="none" stroke="#6e6e6e" stroke-width="2.6"/></svg>
<div class="t" style="left:1941px;top:767.0px;font-size:31px;font-style:italic;font-family:Liberation Serif;color:#6e6e6e;transform:scaleX(1.15);transform-origin:0 0">α</div>
<svg style="left:1969px;top:775.0px" width="23" height="23" viewBox="0 0 23 23"><rect x="0.0" y="0.0" width="7.8" height="7.8" fill="#545454"/><rect x="7.7" y="0.0" width="7.8" height="7.8" fill="#7a7a7a"/><rect x="15.4" y="0.0" width="7.8" height="7.8" fill="#545454"/><rect x="0.0" y="7.7" width="7.8" height="7.8" fill="#7a7a7a"/><rect x="7.7" y="7.7" width="7.8" height="7.8" fill="#545454"/><rect x="15.4" y="7.7" width="7.8" height="7.8" fill="#7a7a7a"/><rect x="0.0" y="15.4" width="7.8" height="7.8" fill="#545454"/><rect x="7.7" y="15.4" width="7.8" height="7.8" fill="#7a7a7a"/><rect x="15.4" y="15.4" width="7.8" height="7.8" fill="#545454"/></svg>
<div class="a" style="left:1616px;top:845px;width:383px;height:1px;background:#363636"></div>
<svg style="left:1620px;top:815px" width="24" height="22" viewBox="0 0 24 22"><path d="M2 11 Q12 1 22 11" fill="none" stroke="#d2d2d2" stroke-width="1.6"/><path d="M2 14 Q12 24 22 14" fill="none" stroke="#d2d2d2" stroke-width="1.6"/><circle cx="12" cy="10" r="5" fill="#d2d2d2"/></svg>
<div class="a" style="left:1655px;top:814px;width:29px;height:25px;background:repeating-conic-gradient(#d8d8d8 0 25%,#fff 0 50%) 0 0/10px 10px;box-shadow:inset 0 0 0 30px #f5d0cc80;"></div>
<svg style="left:1695px;top:805px" width="17" height="17" viewBox="0 0 17 17"><path d="M3 1 H15 V12 L11 16 H7 V13" fill="none" stroke="#d2d2d2" stroke-width="1.5"/><path d="M1 3 L9 10" stroke="#d2d2d2" stroke-width="1.5"/></svg>
<div class="t" style="left:1727px;top:818.1px;font-size:17px;color:#e4e4e4;letter-spacing:-0.5px">Paint Layer 7</div>
<svg style="left:1915px;top:815.5px" width="20" height="24" viewBox="0 0 20 24"><rect x="0.5" y="9.5" width="18" height="12" fill="#6e6e6e"/><path d="M9.5 1.5 Q17 2 17 9.5" fill="none" stroke="#6e6e6e" stroke-width="2.6"/></svg>
<div class="t" style="left:1941px;top:807.5px;font-size:31px;font-style:italic;font-family:Liberation Serif;color:#6e6e6e;transform:scaleX(1.15);transform-origin:0 0">α</div>
<svg style="left:1969px;top:815.5px" width="23" height="23" viewBox="0 0 23 23"><rect x="0.0" y="0.0" width="7.8" height="7.8" fill="#545454"/><rect x="7.7" y="0.0" width="7.8" height="7.8" fill="#7a7a7a"/><rect x="15.4" y="0.0" width="7.8" height="7.8" fill="#545454"/><rect x="0.0" y="7.7" width="7.8" height="7.8" fill="#7a7a7a"/><rect x="7.7" y="7.7" width="7.8" height="7.8" fill="#545454"/><rect x="15.4" y="7.7" width="7.8" height="7.8" fill="#7a7a7a"/><rect x="0.0" y="15.4" width="7.8" height="7.8" fill="#545454"/><rect x="7.7" y="15.4" width="7.8" height="7.8" fill="#7a7a7a"/><rect x="15.4" y="15.4" width="7.8" height="7.8" fill="#545454"/></svg>
<div class="a" style="left:1648px;top:849px;width:349px;height:40px;background:#52728f;border-bottom:1px solid #6a8aa8"></div>
<svg style="left:1620px;top:856px" width="24" height="22" viewBox="0 0 24 22"><path d="M2 11 Q12 1 22 11" fill="none" stroke="#d2d2d2" stroke-width="1.6"/><path d="M2 14 Q12 24 22 14" fill="none" stroke="#d2d2d2" stroke-width="1.6"/><circle cx="12" cy="10" r="5" fill="#d2d2d2"/></svg>
<div class="a" style="left:1655px;top:854px;width:29px;height:26px;background:repeating-conic-gradient(#d8d8d8 0 25%,#fff 0 50%) 0 0/10px 10px;box-shadow:inset 0 0 0 30px #f8f8f880;border:1px solid #222;"></div>
<svg style="left:1695px;top:846px" width="17" height="17" viewBox="0 0 17 17"><path d="M3 1 H15 V12 L11 16 H7 V13" fill="none" stroke="#d2d2d2" stroke-width="1.5"/><path d="M1 3 L9 10" stroke="#d2d2d2" stroke-width="1.5"/></svg>
<div class="t" style="left:1727px;top:858.6px;font-size:17px;color:#e4e4e4;letter-spacing:-0.5px">Paint Layer 8</div>
<svg style="left:1915px;top:856.0px" width="20" height="24" viewBox="0 0 20 24"><rect x="0.5" y="9.5" width="18" height="12" fill="#7a96b0"/><path d="M9.5 1.5 Q17 2 17 9.5" fill="none" stroke="#7a96b0" stroke-width="2.6"/></svg>
<div class="t" style="left:1941px;top:848.0px;font-size:31px;font-style:italic;font-family:Liberation Serif;color:#7a96b0;transform:scaleX(1.15);transform-origin:0 0">α</div>
<svg style="left:1969px;top:856.0px" width="23" height="23" viewBox="0 0 23 23"><rect x="0.0" y="0.0" width="7.8" height="7.8" fill="#6a88a4"/><rect x="7.7" y="0.0" width="7.8" height="7.8" fill="#90aac4"/><rect x="15.4" y="0.0" width="7.8" height="7.8" fill="#6a88a4"/><rect x="0.0" y="7.7" width="7.8" height="7.8" fill="#90aac4"/><rect x="7.7" y="7.7" width="7.8" height="7.8" fill="#6a88a4"/><rect x="15.4" y="7.7" width="7.8" height="7.8" fill="#90aac4"/><rect x="0.0" y="15.4" width="7.8" height="7.8" fill="#6a88a4"/><rect x="7.7" y="15.4" width="7.8" height="7.8" fill="#90aac4"/><rect x="15.4" y="15.4" width="7.8" height="7.8" fill="#6a88a4"/></svg>
<div class="a" style="left:1616px;top:926px;width:383px;height:1px;background:#363636"></div>
<svg style="left:1620px;top:896px" width="24" height="22" viewBox="0 0 24 22"><path d="M2 11 Q12 1 22 11" fill="none" stroke="#d2d2d2" stroke-width="1.6"/><path d="M2 14 Q12 24 22 14" fill="none" stroke="#d2d2d2" stroke-width="1.6"/><circle cx="12" cy="10" r="5" fill="#d2d2d2"/></svg>
<div class="a" style="left:1664px;top:894px;width:9px;height:29px;background:repeating-linear-gradient(0deg,#fff 0 6px,#ddd 6px 12px)"></div>
<svg style="left:1695px;top:886px" width="17" height="17" viewBox="0 0 17 17"><path d="M3 1 H15 V12 L11 16 H7 V13" fill="none" stroke="#d2d2d2" stroke-width="1.5"/><path d="M1 3 L9 10" stroke="#d2d2d2" stroke-width="1.5"/></svg>
<div class="t" style="left:1727px;top:899.1px;font-size:17px;color:#e4e4e4;letter-spacing:-0.5px">Paint Layer 5</div>
<svg style="left:1915px;top:896.5px" width="20" height="24" viewBox="0 0 20 24"><rect x="0.5" y="9.5" width="18" height="12" fill="#6e6e6e"/><path d="M9.5 1.5 Q17 2 17 9.5" fill="none" stroke="#6e6e6e" stroke-width="2.6"/></svg>
<div class="t" style="left:1941px;top:888.5px;font-size:31px;font-style:italic;font-family:Liberation Serif;color:#6e6e6e;transform:scaleX(1.15);transform-origin:0 0">α</div>
<svg style="left:1969px;top:896.5px" width="23" height="23" viewBox="0 0 23 23"><rect x="0.0" y="0.0" width="7.8" height="7.8" fill="#545454"/><rect x="7.7" y="0.0" width="7.8" height="7.8" fill="#7a7a7a"/><rect x="15.4" y="0.0" width="7.8" height="7.8" fill="#545454"/><rect x="0.0" y="7.7" width="7.8" height="7.8" fill="#7a7a7a"/><rect x="7.7" y="7.7" width="7.8" height="7.8" fill="#545454"/><rect x="15.4" y="7.7" width="7.8" height="7.8" fill="#7a7a7a"/><rect x="0.0" y="15.4" width="7.8" height="7.8" fill="#545454"/><rect x="7.7" y="15.4" width="7.8" height="7.8" fill="#7a7a7a"/><rect x="15.4" y="15.4" width="7.8" height="7.8" fill="#545454"/></svg>
<div class="a" style="left:1616px;top:967px;width:383px;height:1px;background:#363636"></div>
<svg style="left:1620px;top:937px" width="24" height="22" viewBox="0 0 24 22"><path d="M2 11 Q12 1 22 11" fill="none" stroke="#d2d2d2" stroke-width="1.6"/><path d="M2 14 Q12 24 22 14" fill="none" stroke="#d2d2d2" stroke-width="1.6"/><circle cx="12" cy="10" r="5" fill="#d2d2d2"/></svg>
<div class="a" style="left:1655px;top:936px;width:29px;height:25px;background:repeating-conic-gradient(#d8d8d8 0 25%,#fff 0 50%) 0 0/10px 10px;box-shadow:inset 0 0 0 30px #f0e8f080;"></div>
<svg style="left:1695px;top:927px" width="17" height="17" viewBox="0 0 17 17"><path d="M3 1 H15 V12 L11 16 H7 V13" fill="none" stroke="#d2d2d2" stroke-width="1.5"/><path d="M1 3 L9 10" stroke="#d2d2d2" stroke-width="1.5"/></svg>
<div class="t" style="left:1727px;top:939.6px;font-size:17px;color:#e4e4e4;letter-spacing:-0.5px">Paint Layer 6</div>
<svg style="left:1915px;top:937.0px" width="20" height="24" viewBox="0 0 20 24"><rect x="0.5" y="9.5" width="18" height="12" fill="#6e6e6e"/><path d="M9.5 1.5 Q17 2 17 9.5" fill="none" stroke="#6e6e6e" stroke-width="2.6"/></svg>
<div class="t" style="left:1941px;top:929.0px;font-size:31px;font-style:italic;font-family:Liberation Serif;color:#6e6e6e;transform:scaleX(1.15);transform-origin:0 0">α</div>
<svg style="left:1969px;top:937.0px" width="23" height="23" viewBox="0 0 23 23"><rect x="0.0" y="0.0" width="7.8" height="7.8" fill="#545454"/><rect x="7.7" y="0.0" width="7.8" height="7.8" fill="#7a7a7a"/><rect x="15.4" y="0.0" width="7.8" height="7.8" fill="#545454"/><rect x="0.0" y="7.7" width="7.8" height="7.8" fill="#7a7a7a"/><rect x="7.7" y="7.7" width="7.8" height="7.8" fill="#545454"/><rect x="15.4" y="7.7" width="7.8" height="7.8" fill="#7a7a7a"/><rect x="0.0" y="15.4" width="7.8" height="7.8" fill="#545454"/><rect x="7.7" y="15.4" width="7.8" height="7.8" fill="#7a7a7a"/><rect x="15.4" y="15.4" width="7.8" height="7.8" fill="#545454"/></svg>
<div class="a" style="left:1616px;top:1007px;width:383px;height:1px;background:#363636"></div>
<svg style="left:1620px;top:977px" width="24" height="22" viewBox="0 0 24 22"><path d="M2 11 Q12 1 22 11" fill="none" stroke="#d2d2d2" stroke-width="1.6"/><path d="M2 14 Q12 24 22 14" fill="none" stroke="#d2d2d2" stroke-width="1.6"/><circle cx="12" cy="10" r="5" fill="#d2d2d2"/></svg>
<div class="a" style="left:1655px;top:978px;width:29px;height:19px;background:#e2dcc6;"></div>
<svg style="left:1695px;top:967px" width="17" height="17" viewBox="0 0 17 17"><path d="M3 1 H15 V12 L11 16 H7 V13" fill="none" stroke="#d2d2d2" stroke-width="1.5"/><path d="M1 3 L9 10" stroke="#d2d2d2" stroke-width="1.5"/></svg>
<div class="t" style="left:1727px;top:980.1px;font-size:17px;color:#e4e4e4;letter-spacing:-0.5px">Background</div>
<svg style="left:1915px;top:977.5px" width="20" height="24" viewBox="0 0 20 24"><rect x="0.5" y="9.5" width="18" height="12" fill="#6e6e6e"/><path d="M9.5 1.5 Q17 2 17 9.5" fill="none" stroke="#6e6e6e" stroke-width="2.6"/></svg>
<div class="t" style="left:1941px;top:969.5px;font-size:31px;font-style:italic;font-family:Liberation Serif;color:#6e6e6e;transform:scaleX(1.15);transform-origin:0 0">α</div>
<svg style="left:1969px;top:977.5px" width="23" height="23" viewBox="0 0 23 23"><rect x="0.0" y="0.0" width="7.8" height="7.8" fill="#545454"/><rect x="7.7" y="0.0" width="7.8" height="7.8" fill="#7a7a7a"/><rect x="15.4" y="0.0" width="7.8" height="7.8" fill="#545454"/><rect x="0.0" y="7.7" width="7.8" height="7.8" fill="#7a7a7a"/><rect x="7.7" y="7.7" width="7.8" height="7.8" fill="#545454"/><rect x="15.4" y="7.7" width="7.8" height="7.8" fill="#7a7a7a"/><rect x="0.0" y="15.4" width="7.8" height="7.8" fill="#545454"/><rect x="7.7" y="15.4" width="7.8" height="7.8" fill="#7a7a7a"/><rect x="15.4" y="15.4" width="7.8" height="7.8" fill="#545454"/></svg>
<svg style="left:1622px;top:1045px" width="28" height="28" viewBox="0 0 28 28"><path d="M14 1 V27 M1 14 H27" stroke="#d2d2d2" stroke-width="2.6"/></svg>
<svg style="left:1661px;top:1057px" width="8" height="5" viewBox="0 0 8 5"><path d="M0 0 H8 L4 4.5 Z" fill="#9a9a9a"/></svg>
<svg style="left:1683px;top:1043px" width="32" height="32" viewBox="0 0 32 32"><rect x="8" y="1.5" width="22" height="22" fill="none" stroke="#d2d2d2" stroke-width="2.6"/><path d="M2 8 V30 H24" fill="none" stroke="#d2d2d2" stroke-width="2.6"/></svg>
<svg style="left:1730px;top:1048px" width="32" height="18" viewBox="0 0 32 18"><path d="M2 2 L16 16 L30 2" fill="none" stroke="#d2d2d2" stroke-width="2.8"/></svg>
<svg style="left:1778px;top:1046px" width="32" height="18" viewBox="0 0 32 18"><path d="M2 16 L16 2 L30 16" fill="none" stroke="#d2d2d2" stroke-width="2.8"/></svg>
<svg style="left:1826px;top:1044px" width="32" height="30" viewBox="0 0 32 30"><path d="M1 5 H31 M1 15 H31 M1 25 H31" stroke="#d2d2d2" stroke-width="2.6"/><rect x="20" y="1" width="6" height="8" rx="2" fill="#d2d2d2"/><rect x="8" y="11" width="6" height="8" rx="2" fill="#d2d2d2"/><rect x="14" y="21" width="6" height="8" rx="2" fill="#d2d2d2"/></svg>
<svg style="left:1867px;top:1057px" width="8" height="5" viewBox="0 0 8 5"><path d="M0 0 H8 L4 4.5 Z" fill="#9a9a9a"/></svg>
<svg style="left:1960px;top:1044px" width="30" height="32" viewBox="0 0 30 32"><path d="M1 6 H29" stroke="#d2d2d2" stroke-width="2.6"/><path d="M10 6 V2 H20 V6" fill="none" stroke="#d2d2d2" stroke-width="2"/><path d="M4 9 H26 L24 30 Q24 31 22 31 H8 Q6 31 6 30 Z" fill="#d2d2d2"/></svg>
</body></html>
